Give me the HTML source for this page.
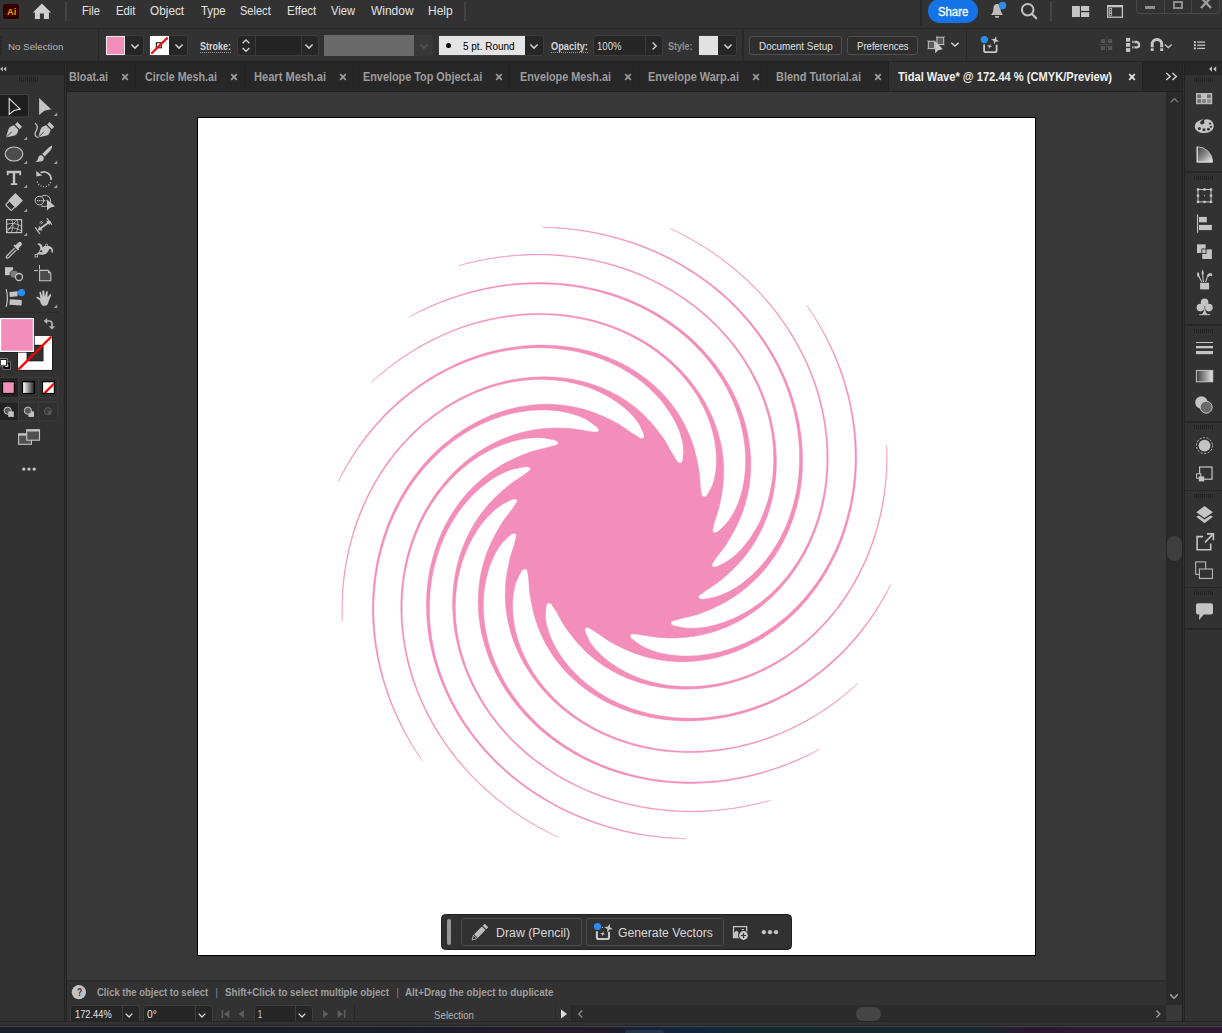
<!DOCTYPE html>
<html><head><meta charset="utf-8"><title>Tidal Wave</title>
<style>
html,body{margin:0;padding:0;}
body{width:1222px;height:1033px;overflow:hidden;background:#323232;position:relative;font-family:"Liberation Sans",sans-serif;}
div,svg{box-sizing:border-box;}
svg{overflow:visible;}
</style></head><body>
<div style="position:absolute;left:0px;top:0px;width:1222px;height:28px;background:#323232;"></div>
<div style="position:absolute;left:0px;top:28px;width:1222px;height:1px;background:#262626;"></div>
<div style="position:absolute;left:0px;top:29px;width:1222px;height:32px;background:#323232;"></div>
<div style="position:absolute;left:0px;top:61px;width:1222px;height:1px;background:#232323;"></div>
<div style="position:absolute;left:67px;top:91px;width:1099px;height:889px;background:#383838;"></div>
<div style="position:absolute;left:67px;top:91px;width:1117px;height:1px;background:#212121;"></div>
<div style="position:absolute;left:67px;top:62px;width:1117px;height:29px;background:#272727;"></div>
<div style="position:absolute;left:0px;top:62px;width:64px;height:960px;background:#323232;"></div>
<div style="position:absolute;left:0px;top:62px;width:64px;height:12.5px;background:#272727;"></div>
<div style="position:absolute;left:64px;top:62px;width:3px;height:960px;background:#2e2e2e;"></div>
<div style="position:absolute;left:64px;top:62px;width:1px;height:960px;background:#232323;"></div>
<div style="position:absolute;left:66px;top:62px;width:1px;height:960px;background:#232323;"></div>
<div style="position:absolute;left:197px;top:117px;width:839px;height:839px;background:#fff;border:1px solid #000;"></div>
<svg style="position:absolute;left:0;top:0" width="1222" height="1033"><path d="M530.7,469.6 L530.4,468.7 L530.1,467.9 L529.5,467.5 L528.8,467.1 L528.1,466.9 L527.3,466.8 L526.4,466.8 L525.5,466.8 L524.6,466.9 L523.6,467.1 L522.6,467.2 L521.6,467.4 L520.6,467.6 L519.7,467.8 L518.7,468.0 L517.7,468.2 L516.7,468.4 L515.8,468.6 L514.8,468.8 L513.8,469.0 L512.8,469.3 L511.8,469.6 L510.7,469.9 L509.7,470.3 L508.7,470.7 L507.6,471.1 L506.6,471.5 L505.5,472.0 L504.5,472.4 L503.4,472.9 L501.0,474.0 L498.6,475.3 L496.2,476.7 L493.8,478.1 L491.3,479.7 L488.9,481.3 L486.5,483.1 L484.2,484.9 L481.8,486.8 L479.5,488.8 L477.2,490.8 L474.9,493.0 L472.6,495.2 L470.4,497.6 L468.2,500.0 L466.1,502.4 L464.0,505.0 L461.9,507.6 L459.9,510.3 L457.9,513.1 L456.0,515.9 L454.1,518.8 L452.3,521.8 L450.5,524.8 L448.8,527.9 L447.2,531.1 L445.6,534.3 L444.1,537.6 L442.6,541.0 L441.2,544.4 L439.9,547.9 L438.7,551.4 L437.5,555.0 L436.4,558.7 L435.4,562.4 L434.4,566.1 L433.5,569.9 L432.8,573.7 L432.0,577.6 L431.4,581.6 L430.9,585.5 L430.4,589.5 L430.0,593.6 L429.8,597.6 L429.6,601.8 L429.5,605.9 L429.5,610.1 L429.5,614.3 L429.7,618.5 L430.0,622.8 L430.4,627.1 L430.9,631.4 L431.4,635.7 L432.1,640.1 L432.9,644.4 L433.8,648.8 L434.7,653.2 L435.8,657.5 L437.0,661.9 L438.3,666.3 L439.7,670.7 L441.2,675.1 L442.8,679.5 L444.5,683.8 L446.3,688.2 L448.3,692.6 L450.3,696.9 L452.4,701.2 L454.7,705.5 L457.1,709.8 L459.5,714.0 L462.1,718.2 L464.8,722.4 L467.6,726.6 L470.5,730.7 L473.4,734.8 L476.6,738.8 L479.8,742.8 L483.1,746.7 L486.5,750.6 L490.0,754.5 L493.6,758.3 L497.4,762.0 L501.2,765.7 L505.1,769.3 L509.1,772.8 L513.3,776.3 L517.5,779.7 L521.8,783.1 L526.2,786.3 L530.7,789.5 L535.3,792.6 L540.0,795.6 L544.8,798.6 L549.6,801.4 L554.6,804.2 L559.6,806.9 L564.7,809.4 L569.9,811.9 L575.1,814.3 L580.5,816.6 L585.9,818.8 L591.4,820.8 L596.9,822.8 L602.6,824.7 L608.3,826.4 L614.0,828.1 L619.8,829.6 L625.7,831.0 L631.6,832.3 L637.6,833.5 L643.6,834.6 L649.6,835.5 L655.7,836.3 L661.8,837.0 L668.0,837.6 L674.2,838.1 L680.2,838.4 L686.2,838.7 L686.2,838.7 L679.4,838.6 L672.7,838.3 L666.2,837.9 L659.8,837.3 L653.4,836.6 L647.1,835.8 L640.9,834.8 L634.7,833.7 L628.6,832.5 L622.5,831.1 L616.5,829.6 L610.6,828.1 L604.8,826.3 L599.0,824.5 L593.3,822.6 L587.6,820.5 L582.1,818.4 L576.6,816.1 L571.1,813.7 L565.8,811.2 L560.5,808.7 L555.4,806.0 L550.3,803.2 L545.3,800.3 L540.4,797.4 L535.6,794.3 L530.8,791.2 L526.2,788.0 L521.7,784.7 L517.2,781.3 L512.9,777.9 L508.7,774.4 L504.5,770.8 L500.5,767.1 L496.5,763.4 L492.7,759.6 L489.0,755.7 L485.3,751.8 L481.8,747.8 L478.4,743.8 L475.1,739.7 L471.9,735.6 L468.8,731.4 L465.8,727.2 L462.9,723.0 L460.2,718.7 L457.5,714.4 L454.9,710.0 L452.5,705.6 L450.2,701.2 L448.0,696.8 L445.9,692.3 L443.9,687.8 L442.0,683.3 L440.2,678.8 L438.5,674.3 L437.0,669.8 L435.5,665.3 L434.2,660.7 L433.0,656.2 L431.8,651.6 L430.8,647.1 L429.9,642.6 L429.1,638.0 L428.4,633.5 L427.8,629.0 L427.4,624.6 L427.0,620.1 L426.7,615.7 L426.5,611.2 L426.4,606.8 L426.5,602.5 L426.6,598.1 L426.8,593.8 L427.1,589.6 L427.5,585.3 L428.0,581.1 L428.6,577.0 L429.3,572.8 L430.1,568.8 L431.0,564.8 L431.9,560.8 L433.0,556.9 L434.1,553.0 L435.3,549.2 L436.6,545.5 L437.9,541.8 L439.4,538.1 L440.9,534.6 L442.4,531.0 L444.1,527.6 L445.8,524.2 L447.6,520.9 L449.5,517.6 L451.4,514.4 L453.3,511.3 L455.4,508.3 L457.5,505.3 L459.6,502.4 L461.8,499.6 L464.1,496.8 L466.4,494.1 L468.7,491.5 L471.1,489.0 L473.6,486.5 L476.0,484.2 L478.6,481.9 L481.1,479.6 L483.7,477.5 L486.4,475.4 L489.0,473.3 L491.7,471.4 L494.5,469.5 L497.3,467.7 L500.1,466.0 L502.9,464.3 L505.8,462.7 L508.7,461.2 L511.6,459.7 L513.0,459.1 L514.3,458.5 L515.6,457.8 L517.0,457.2 L518.3,456.7 L519.7,456.1 L521.0,455.5 L522.4,455.0 L523.8,454.4 L525.2,453.9 L526.6,453.4 L528.0,452.8 L529.5,452.3 L530.9,451.8 L532.4,451.3 L533.8,450.9 L535.2,450.5 L536.7,450.1 L538.1,449.8 L539.5,449.4 L540.9,449.1 L542.4,448.7 L543.9,448.4 L545.5,448.0 L547.1,447.6 L548.9,447.2 L550.8,446.6 L552.8,446.1 L555.1,445.4 L557.7,444.6 L557.7,444.6 L558.0,443.6 L558.1,442.8 L557.9,442.2 L557.6,441.7 L557.1,441.2 L556.4,440.8 L555.7,440.5 L554.9,440.2 L554.0,440.0 L553.1,439.8 L552.2,439.6 L551.3,439.4 L550.4,439.2 L549.4,439.0 L548.5,438.8 L547.6,438.7 L546.7,438.5 L545.8,438.3 L544.8,438.2 L543.9,438.0 L542.9,437.9 L541.9,437.8 L540.9,437.8 L539.8,437.7 L538.8,437.7 L537.7,437.7 L536.7,437.7 L535.6,437.7 L534.5,437.8 L533.4,437.8 L530.8,438.0 L528.2,438.3 L525.5,438.6 L522.9,439.1 L520.2,439.6 L517.4,440.2 L514.7,440.8 L511.9,441.6 L509.2,442.4 L506.4,443.3 L503.6,444.3 L500.8,445.4 L498.0,446.5 L495.2,447.7 L492.4,449.0 L489.6,450.4 L486.8,451.9 L484.0,453.4 L481.2,455.1 L478.5,456.8 L475.8,458.5 L473.0,460.4 L470.3,462.3 L467.6,464.4 L465.0,466.5 L462.3,468.7 L459.7,470.9 L457.2,473.3 L454.6,475.7 L452.1,478.2 L449.6,480.8 L447.2,483.5 L444.8,486.3 L442.4,489.1 L440.1,492.0 L437.9,495.0 L435.7,498.1 L433.5,501.2 L431.4,504.4 L429.3,507.7 L427.4,511.1 L425.4,514.5 L423.6,518.0 L421.8,521.6 L420.0,525.2 L418.4,528.9 L416.8,532.7 L415.3,536.5 L413.8,540.4 L412.4,544.4 L411.1,548.4 L409.9,552.4 L408.8,556.5 L407.8,560.7 L406.8,564.9 L405.9,569.2 L405.1,573.5 L404.4,577.8 L403.8,582.2 L403.3,586.7 L402.9,591.1 L402.6,595.7 L402.3,600.2 L402.2,604.8 L402.2,609.4 L402.2,614.0 L402.4,618.7 L402.7,623.4 L403.1,628.1 L403.5,632.9 L404.1,637.6 L404.8,642.4 L405.6,647.2 L406.5,652.0 L407.5,656.8 L408.6,661.6 L409.8,666.4 L411.2,671.2 L412.6,676.0 L414.2,680.8 L415.9,685.6 L417.6,690.4 L419.5,695.2 L421.5,699.9 L423.7,704.7 L425.9,709.4 L428.2,714.1 L430.7,718.8 L433.3,723.4 L435.9,728.1 L438.7,732.6 L441.6,737.2 L444.6,741.7 L447.8,746.2 L451.0,750.6 L454.3,755.0 L457.8,759.4 L461.3,763.6 L465.0,767.9 L468.7,772.0 L472.6,776.2 L476.6,780.2 L480.7,784.2 L484.9,788.1 L489.2,792.0 L493.6,795.8 L498.0,799.5 L502.6,803.1 L507.3,806.7 L512.1,810.2 L516.9,813.6 L521.9,816.9 L526.9,820.1 L532.0,823.2 L537.2,826.2 L542.4,829.1 L547.8,832.0 L553.1,834.7 L558.3,837.2 L558.3,837.2 L552.4,834.5 L546.6,831.6 L541.0,828.7 L535.5,825.7 L530.2,822.5 L524.9,819.3 L519.8,816.0 L514.7,812.6 L509.7,809.1 L504.9,805.6 L500.2,801.9 L495.5,798.2 L491.0,794.4 L486.6,790.5 L482.2,786.6 L478.0,782.5 L473.9,778.5 L469.9,774.3 L466.0,770.1 L462.2,765.8 L458.5,761.5 L455.0,757.1 L451.5,752.7 L448.2,748.2 L445.0,743.7 L441.8,739.1 L438.8,734.5 L436.0,729.9 L433.2,725.2 L430.5,720.5 L428.0,715.7 L425.6,711.0 L423.3,706.2 L421.1,701.4 L419.0,696.5 L417.0,691.7 L415.2,686.8 L413.4,681.9 L411.8,677.1 L410.3,672.2 L408.9,667.3 L407.6,662.4 L406.5,657.5 L405.4,652.6 L404.5,647.7 L403.6,642.8 L402.9,637.9 L402.3,633.1 L401.8,628.3 L401.3,623.4 L401.1,618.6 L400.9,613.9 L400.8,609.1 L400.8,604.4 L400.9,599.7 L401.1,595.0 L401.4,590.4 L401.9,585.8 L402.4,581.3 L403.0,576.7 L403.7,572.3 L404.5,567.8 L405.4,563.5 L406.4,559.1 L407.4,554.8 L408.6,550.6 L409.8,546.4 L411.2,542.3 L412.6,538.2 L414.1,534.2 L415.7,530.3 L417.3,526.4 L419.0,522.5 L420.8,518.8 L422.7,515.1 L424.6,511.4 L426.6,507.9 L428.7,504.4 L430.9,501.0 L433.1,497.6 L435.3,494.3 L437.7,491.1 L440.0,487.9 L442.5,484.9 L445.0,481.9 L447.5,478.9 L450.1,476.1 L452.8,473.3 L455.5,470.6 L458.2,468.0 L461.0,465.5 L463.8,463.0 L466.7,460.6 L469.6,458.3 L472.5,456.1 L475.5,454.0 L478.5,451.9 L481.5,450.0 L484.6,448.1 L487.7,446.3 L490.8,444.6 L493.9,443.0 L497.0,441.4 L500.2,440.0 L503.3,438.6 L506.5,437.4 L509.7,436.2 L512.9,435.1 L516.1,434.0 L519.3,433.1 L522.5,432.3 L525.8,431.5 L529.0,430.8 L532.2,430.2 L535.4,429.6 L538.6,429.2 L541.9,428.8 L545.1,428.5 L548.3,428.3 L549.8,428.2 L551.2,428.2 L552.7,428.1 L554.1,428.1 L555.6,428.1 L557.0,428.1 L558.5,428.1 L560.0,428.1 L561.4,428.1 L563.0,428.2 L564.5,428.2 L566.0,428.3 L567.6,428.3 L569.1,428.4 L570.6,428.6 L572.1,428.7 L573.6,428.9 L575.0,429.1 L576.4,429.3 L577.9,429.5 L579.3,429.8 L580.8,430.0 L582.4,430.3 L583.9,430.6 L585.6,430.8 L587.5,431.1 L589.5,431.4 L591.7,431.7 L594.2,432.0 L597.0,432.3 L597.0,432.3 L597.9,431.6 L598.6,431.0 L598.8,430.4 L598.8,429.8 L598.7,429.2 L598.3,428.7 L597.9,428.1 L597.4,427.6 L596.8,427.0 L596.2,426.5 L595.5,426.0 L594.8,425.4 L594.1,424.9 L593.5,424.4 L592.8,423.9 L592.1,423.4 L591.5,422.9 L590.8,422.4 L590.1,421.9 L589.4,421.4 L588.7,420.9 L587.9,420.4 L587.1,420.0 L586.2,419.5 L585.4,419.1 L584.5,418.6 L583.6,418.2 L582.7,417.8 L581.8,417.4 L580.9,417.0 L578.7,416.1 L576.4,415.3 L574.1,414.5 L571.6,413.8 L569.2,413.1 L566.6,412.5 L564.0,412.0 L561.4,411.5 L558.7,411.1 L555.9,410.7 L553.2,410.4 L550.3,410.2 L547.4,410.1 L544.5,410.0 L541.6,410.0 L538.6,410.0 L535.6,410.2 L532.6,410.3 L529.6,410.6 L526.5,411.0 L523.4,411.4 L520.3,411.8 L517.2,412.4 L514.1,413.0 L511.0,413.8 L507.8,414.5 L504.7,415.4 L501.5,416.3 L498.4,417.4 L495.2,418.5 L492.1,419.6 L488.9,420.9 L485.8,422.2 L482.6,423.6 L479.5,425.1 L476.4,426.7 L473.2,428.3 L470.2,430.1 L467.1,431.9 L464.0,433.7 L461.0,435.7 L458.0,437.7 L455.0,439.8 L452.0,442.0 L449.1,444.3 L446.1,446.7 L443.2,449.1 L440.4,451.6 L437.6,454.2 L434.8,456.9 L432.0,459.6 L429.3,462.4 L426.7,465.3 L424.1,468.3 L421.5,471.4 L419.0,474.5 L416.5,477.7 L414.0,481.0 L411.7,484.3 L409.4,487.7 L407.1,491.2 L404.9,494.8 L402.8,498.4 L400.7,502.1 L398.7,505.9 L396.7,509.7 L394.8,513.6 L393.0,517.5 L391.3,521.5 L389.6,525.6 L388.0,529.8 L386.5,534.0 L385.1,538.2 L383.7,542.5 L382.5,546.9 L381.3,551.3 L380.2,555.7 L379.1,560.2 L378.2,564.8 L377.4,569.4 L376.6,574.0 L375.9,578.7 L375.4,583.4 L374.9,588.2 L374.5,593.0 L374.2,597.8 L374.0,602.7 L373.9,607.6 L373.9,612.5 L374.1,617.5 L374.3,622.4 L374.6,627.4 L375.0,632.4 L375.5,637.5 L376.1,642.5 L376.9,647.5 L377.7,652.6 L378.6,657.7 L379.7,662.7 L380.8,667.8 L382.1,672.9 L383.4,677.9 L384.9,683.0 L386.5,688.1 L388.2,693.1 L390.0,698.2 L391.9,703.2 L393.9,708.2 L396.1,713.2 L398.3,718.2 L400.6,723.1 L403.0,728.0 L405.6,732.9 L408.2,737.7 L410.9,742.5 L413.7,747.2 L416.6,751.9 L419.5,756.3 L422.3,760.7 L422.3,760.7 L418.6,755.4 L415.1,750.3 L411.9,745.2 L408.9,740.1 L406.0,735.1 L403.2,729.9 L400.6,724.8 L398.1,719.7 L395.7,714.5 L393.4,709.4 L391.3,704.2 L389.2,699.0 L387.3,693.8 L385.6,688.6 L383.9,683.4 L382.3,678.1 L380.9,672.9 L379.6,667.7 L378.4,662.4 L377.3,657.2 L376.3,652.0 L375.4,646.8 L374.6,641.6 L374.0,636.4 L373.5,631.2 L373.0,626.1 L372.7,620.9 L372.5,615.8 L372.4,610.7 L372.4,605.7 L372.5,600.7 L372.7,595.7 L373.0,590.7 L373.4,585.8 L373.9,580.9 L374.5,576.0 L375.3,571.2 L376.1,566.4 L376.9,561.7 L377.9,557.0 L379.0,552.4 L380.2,547.8 L381.4,543.2 L382.8,538.7 L384.2,534.3 L385.7,529.9 L387.3,525.6 L389.0,521.3 L390.8,517.1 L392.6,513.0 L394.5,508.9 L396.5,504.9 L398.6,501.0 L400.7,497.1 L402.9,493.3 L405.2,489.5 L407.5,485.8 L409.9,482.2 L412.4,478.7 L414.9,475.3 L417.5,471.9 L420.1,468.6 L422.8,465.3 L425.6,462.2 L428.4,459.1 L431.2,456.1 L434.1,453.2 L437.0,450.4 L440.0,447.6 L443.0,445.0 L446.1,442.4 L449.2,439.9 L452.3,437.5 L455.5,435.1 L458.7,432.9 L461.9,430.7 L465.1,428.6 L468.4,426.6 L471.7,424.7 L475.0,422.9 L478.3,421.2 L481.7,419.5 L485.0,418.0 L488.4,416.5 L491.7,415.1 L495.1,413.8 L498.5,412.6 L501.9,411.5 L505.2,410.4 L508.6,409.5 L512.0,408.6 L515.4,407.8 L518.7,407.1 L522.1,406.4 L525.5,405.9 L528.8,405.4 L532.1,405.0 L535.4,404.7 L538.7,404.5 L542.0,404.3 L545.2,404.3 L548.5,404.3 L551.7,404.3 L554.9,404.5 L558.0,404.7 L561.2,405.0 L564.3,405.4 L567.4,405.8 L570.5,406.3 L573.5,406.9 L576.5,407.5 L579.5,408.2 L582.5,408.9 L585.5,409.8 L588.4,410.7 L591.3,411.6 L594.2,412.7 L597.1,413.8 L600.0,414.9 L601.2,415.4 L602.5,416.0 L603.8,416.5 L605.0,417.1 L606.3,417.7 L607.5,418.3 L608.8,418.9 L610.0,419.5 L611.3,420.2 L612.6,420.8 L613.9,421.5 L615.2,422.2 L616.5,422.9 L617.8,423.6 L619.1,424.4 L620.3,425.1 L621.5,425.9 L622.6,426.6 L623.8,427.4 L625.0,428.2 L626.1,429.0 L627.3,429.9 L628.5,430.7 L629.8,431.6 L631.2,432.6 L632.7,433.6 L634.4,434.6 L636.2,435.8 L638.4,437.1 L640.8,438.6 L640.8,438.6 L642.1,438.5 L643.0,438.3 L643.5,437.9 L643.9,437.4 L644.1,436.9 L644.2,436.3 L644.1,435.6 L643.9,434.9 L643.7,434.3 L643.5,433.5 L643.2,432.8 L642.9,432.1 L642.5,431.4 L642.2,430.7 L641.9,429.9 L641.6,429.2 L641.3,428.5 L641.0,427.8 L640.7,427.1 L640.4,426.4 L640.0,425.7 L639.6,425.0 L639.1,424.3 L638.7,423.5 L638.2,422.8 L637.7,422.0 L637.1,421.3 L636.6,420.6 L636.0,419.8 L635.5,419.1 L634.1,417.4 L632.6,415.7 L631.0,414.1 L629.4,412.4 L627.7,410.8 L625.9,409.2 L624.1,407.6 L622.2,406.1 L620.2,404.5 L618.2,403.1 L616.1,401.6 L614.0,400.2 L611.8,398.8 L609.5,397.4 L607.2,396.1 L604.9,394.8 L602.5,393.5 L600.0,392.3 L597.5,391.2 L595.0,390.1 L592.4,389.0 L589.7,388.0 L587.0,387.0 L584.3,386.1 L581.5,385.3 L578.6,384.5 L575.8,383.7 L572.8,383.0 L569.9,382.4 L566.9,381.8 L563.8,381.3 L560.7,380.8 L557.6,380.4 L554.5,380.1 L551.3,379.9 L548.0,379.7 L544.8,379.6 L541.5,379.5 L538.2,379.5 L534.9,379.6 L531.5,379.8 L528.1,380.0 L524.7,380.3 L521.3,380.7 L517.8,381.2 L514.3,381.7 L510.9,382.3 L507.4,383.0 L503.9,383.8 L500.4,384.6 L496.9,385.6 L493.4,386.6 L489.9,387.6 L486.4,388.8 L482.9,390.0 L479.3,391.4 L475.8,392.8 L472.3,394.3 L468.9,395.8 L465.4,397.5 L461.9,399.2 L458.5,401.0 L455.0,402.9 L451.6,404.9 L448.2,406.9 L444.8,409.1 L441.5,411.3 L438.1,413.6 L434.8,416.0 L431.6,418.4 L428.3,421.0 L425.1,423.6 L421.9,426.3 L418.8,429.1 L415.7,431.9 L412.6,434.9 L409.6,437.9 L406.6,441.0 L403.7,444.2 L400.8,447.4 L398.0,450.7 L395.2,454.1 L392.4,457.6 L389.8,461.2 L387.1,464.8 L384.6,468.5 L382.1,472.2 L379.6,476.1 L377.2,480.0 L374.9,483.9 L372.7,488.0 L370.5,492.1 L368.4,496.2 L366.3,500.5 L364.4,504.7 L362.5,509.1 L360.7,513.5 L358.9,517.9 L357.3,522.4 L355.7,527.0 L354.2,531.6 L352.8,536.3 L351.4,541.0 L350.2,545.8 L349.0,550.6 L348.0,555.5 L347.0,560.4 L346.1,565.3 L345.3,570.3 L344.6,575.3 L344.0,580.3 L343.4,585.4 L343.0,590.5 L342.7,595.6 L342.4,600.7 L342.3,605.9 L342.2,611.0 L342.2,616.1 L342.3,621.1 L342.3,621.1 L342.1,615.3 L341.9,609.7 L342.0,604.3 L342.1,598.9 L342.3,593.6 L342.7,588.3 L343.1,583.0 L343.7,577.8 L344.3,572.6 L345.1,567.5 L345.9,562.4 L346.9,557.3 L347.9,552.3 L349.0,547.4 L350.3,542.5 L351.6,537.7 L353.0,532.9 L354.4,528.1 L356.0,523.4 L357.7,518.8 L359.4,514.2 L361.2,509.7 L363.1,505.2 L365.1,500.9 L367.1,496.5 L369.3,492.3 L371.5,488.1 L373.7,483.9 L376.1,479.9 L378.5,475.9 L380.9,472.0 L383.5,468.1 L386.1,464.3 L388.7,460.6 L391.5,457.0 L394.2,453.4 L397.1,449.9 L399.9,446.5 L402.9,443.2 L405.9,439.9 L408.9,436.8 L412.0,433.6 L415.1,430.6 L418.3,427.7 L421.5,424.8 L424.7,422.0 L428.0,419.4 L431.3,416.7 L434.7,414.2 L438.1,411.8 L441.5,409.4 L444.9,407.1 L448.4,404.9 L451.9,402.8 L455.4,400.8 L458.9,398.8 L462.5,396.9 L466.1,395.2 L469.7,393.5 L473.3,391.9 L476.9,390.3 L480.5,388.9 L484.1,387.5 L487.7,386.2 L491.4,385.0 L495.0,383.9 L498.6,382.9 L502.3,382.0 L505.9,381.1 L509.5,380.3 L513.2,379.6 L516.8,379.0 L520.4,378.4 L524.0,378.0 L527.5,377.6 L531.1,377.3 L534.7,377.0 L538.2,376.9 L541.7,376.8 L545.2,376.8 L548.7,376.9 L552.1,377.0 L555.6,377.2 L559.0,377.5 L562.3,377.8 L565.7,378.3 L569.0,378.8 L572.3,379.3 L575.6,379.9 L578.8,380.6 L582.0,381.4 L585.2,382.2 L588.3,383.1 L591.4,384.1 L594.5,385.1 L597.5,386.2 L600.5,387.3 L603.4,388.5 L606.3,389.8 L609.1,391.1 L611.9,392.4 L614.7,393.9 L617.4,395.3 L620.0,396.9 L622.6,398.5 L625.1,400.1 L627.6,401.8 L630.0,403.5 L632.4,405.2 L634.8,407.1 L637.0,408.9 L639.3,410.8 L641.5,412.8 L643.6,414.8 L645.6,416.8 L647.6,418.9 L649.6,421.0 L651.5,423.1 L653.4,425.3 L654.3,426.3 L655.1,427.3 L655.9,428.3 L656.7,429.3 L657.5,430.4 L658.3,431.4 L659.1,432.5 L659.9,433.5 L660.7,434.6 L661.5,435.7 L662.3,436.8 L663.1,438.0 L663.9,439.1 L664.7,440.3 L665.4,441.4 L666.1,442.6 L666.8,443.7 L667.5,444.9 L668.1,446.0 L668.8,447.2 L669.4,448.3 L670.1,449.6 L670.7,450.8 L671.4,452.1 L672.2,453.5 L673.1,454.9 L674.1,456.5 L675.2,458.3 L676.5,460.3 L678.0,462.6 L678.0,462.6 L679.2,462.9 L680.2,463.0 L680.9,462.9 L681.5,462.6 L681.9,462.2 L682.2,461.7 L682.5,461.1 L682.7,460.4 L682.8,459.7 L682.9,459.0 L683.0,458.2 L683.1,457.4 L683.1,456.6 L683.2,455.9 L683.2,455.1 L683.3,454.4 L683.4,453.6 L683.4,452.8 L683.5,452.1 L683.5,451.3 L683.5,450.5 L683.5,449.7 L683.5,448.8 L683.4,448.0 L683.3,447.1 L683.2,446.2 L683.1,445.4 L682.9,444.5 L682.8,443.6 L682.6,442.7 L682.2,440.6 L681.7,438.5 L681.0,436.3 L680.4,434.2 L679.6,432.0 L678.8,429.8 L677.8,427.6 L676.9,425.4 L675.8,423.1 L674.7,420.9 L673.5,418.7 L672.2,416.5 L670.9,414.3 L669.5,412.1 L668.0,409.9 L666.5,407.7 L664.9,405.5 L663.3,403.4 L661.6,401.2 L659.8,399.1 L657.9,397.0 L656.0,395.0 L654.1,392.9 L652.0,390.9 L650.0,388.9 L647.8,387.0 L645.6,385.0 L643.3,383.1 L641.0,381.3 L638.6,379.5 L636.2,377.7 L633.7,375.9 L631.2,374.2 L628.6,372.5 L625.9,370.9 L623.2,369.3 L620.5,367.8 L617.7,366.3 L614.8,364.9 L611.9,363.5 L609.0,362.1 L606.0,360.9 L602.9,359.6 L599.8,358.4 L596.7,357.3 L593.5,356.2 L590.3,355.2 L587.0,354.3 L583.7,353.4 L580.4,352.6 L577.0,351.8 L573.5,351.1 L570.1,350.5 L566.6,349.9 L563.0,349.4 L559.4,349.0 L555.8,348.6 L552.2,348.3 L548.5,348.1 L544.8,347.9 L541.1,347.8 L537.4,347.8 L533.6,347.9 L529.8,348.1 L526.0,348.3 L522.2,348.6 L518.3,349.0 L514.5,349.5 L510.6,350.0 L506.7,350.6 L502.8,351.3 L498.9,352.1 L495.0,353.0 L491.0,353.9 L487.1,355.0 L483.2,356.1 L479.2,357.3 L475.3,358.6 L471.4,359.9 L467.5,361.4 L463.6,362.9 L459.7,364.6 L455.8,366.3 L451.9,368.1 L448.0,370.0 L444.1,371.9 L440.3,374.0 L436.5,376.1 L432.7,378.4 L428.9,380.7 L425.2,383.1 L421.5,385.6 L417.8,388.1 L414.1,390.8 L410.5,393.5 L406.9,396.3 L403.4,399.2 L399.8,402.2 L396.4,405.3 L392.9,408.4 L389.6,411.6 L386.2,414.9 L382.9,418.3 L379.7,421.8 L376.5,425.3 L373.3,428.9 L370.3,432.6 L367.2,436.4 L364.3,440.2 L361.3,444.1 L358.5,448.1 L355.7,452.1 L353.0,456.2 L350.4,460.4 L347.8,464.6 L345.3,468.9 L342.8,473.2 L340.5,477.4 L338.3,481.5 L338.3,481.5 L340.7,476.4 L343.2,471.6 L345.7,466.9 L348.4,462.4 L351.0,457.9 L353.8,453.5 L356.6,449.3 L359.5,445.1 L362.5,440.9 L365.5,436.9 L368.6,433.0 L371.7,429.1 L374.9,425.4 L378.2,421.7 L381.5,418.1 L384.8,414.5 L388.2,411.1 L391.7,407.8 L395.2,404.5 L398.7,401.3 L402.3,398.2 L406.0,395.2 L409.7,392.2 L413.4,389.4 L417.1,386.7 L420.9,384.0 L424.7,381.4 L428.5,378.9 L432.4,376.5 L436.3,374.2 L440.2,372.0 L444.1,369.9 L448.1,367.9 L452.1,365.9 L456.1,364.1 L460.1,362.3 L464.1,360.6 L468.1,359.0 L472.2,357.5 L476.2,356.1 L480.3,354.7 L484.3,353.5 L488.4,352.3 L492.4,351.3 L496.5,350.3 L500.5,349.4 L504.6,348.6 L508.6,347.9 L512.7,347.2 L516.7,346.7 L520.7,346.2 L524.7,345.8 L528.7,345.5 L532.6,345.3 L536.6,345.1 L540.5,345.1 L544.4,345.1 L548.3,345.2 L552.2,345.3 L556.0,345.6 L559.8,345.9 L563.6,346.3 L567.3,346.8 L571.0,347.3 L574.7,347.9 L578.3,348.6 L581.9,349.4 L585.5,350.2 L589.0,351.1 L592.5,352.1 L596.0,353.1 L599.4,354.2 L602.7,355.4 L606.1,356.6 L609.3,357.9 L612.5,359.2 L615.7,360.6 L618.8,362.1 L621.9,363.6 L624.9,365.2 L627.9,366.8 L630.8,368.5 L633.6,370.2 L636.4,372.0 L639.1,373.8 L641.8,375.7 L644.4,377.6 L647.0,379.6 L649.5,381.6 L651.9,383.6 L654.3,385.7 L656.6,387.8 L658.8,389.9 L661.0,392.1 L663.2,394.3 L665.2,396.6 L667.2,398.8 L669.1,401.1 L671.0,403.5 L672.8,405.8 L674.6,408.2 L676.2,410.6 L677.9,413.0 L679.4,415.5 L680.9,417.9 L682.3,420.4 L683.7,422.9 L685.0,425.4 L686.2,427.9 L687.4,430.5 L688.5,433.0 L689.6,435.6 L690.6,438.2 L691.6,440.8 L692.5,443.4 L693.4,446.1 L694.2,448.7 L694.9,451.4 L695.6,454.1 L695.9,455.4 L696.2,456.6 L696.5,457.8 L696.8,459.0 L697.0,460.2 L697.3,461.5 L697.5,462.7 L697.8,463.9 L698.0,465.2 L698.3,466.5 L698.5,467.8 L698.7,469.1 L698.9,470.4 L699.1,471.7 L699.3,473.0 L699.5,474.3 L699.6,475.6 L699.7,476.8 L699.8,478.1 L699.9,479.4 L699.9,480.7 L700.0,482.0 L700.1,483.3 L700.2,484.7 L700.3,486.2 L700.5,487.8 L700.7,489.6 L701.0,491.4 L701.4,493.7 L701.9,496.1 L701.9,496.1 L702.9,496.7 L703.8,497.0 L704.5,497.0 L705.2,496.9 L705.8,496.6 L706.3,496.2 L706.8,495.6 L707.3,495.0 L707.7,494.4 L708.1,493.7 L708.5,493.0 L708.9,492.2 L709.3,491.5 L709.7,490.8 L710.1,490.0 L710.5,489.3 L710.8,488.6 L711.2,487.8 L711.6,487.1 L711.9,486.3 L712.3,485.5 L712.6,484.7 L712.9,483.9 L713.2,483.0 L713.5,482.1 L713.7,481.2 L714.0,480.3 L714.2,479.4 L714.4,478.5 L714.6,477.5 L715.1,475.3 L715.5,473.1 L715.8,470.8 L716.0,468.4 L716.2,466.0 L716.3,463.6 L716.4,461.1 L716.4,458.6 L716.3,456.1 L716.2,453.6 L716.0,451.0 L715.7,448.4 L715.4,445.8 L715.0,443.2 L714.6,440.5 L714.0,437.9 L713.5,435.2 L712.8,432.5 L712.1,429.8 L711.3,427.1 L710.5,424.4 L709.5,421.7 L708.6,419.0 L707.5,416.3 L706.4,413.5 L705.2,410.8 L703.9,408.1 L702.5,405.4 L701.1,402.7 L699.6,400.0 L698.1,397.3 L696.4,394.6 L694.7,392.0 L692.9,389.3 L691.1,386.7 L689.1,384.1 L687.1,381.5 L685.1,378.9 L682.9,376.4 L680.7,373.9 L678.4,371.4 L676.0,368.9 L673.6,366.5 L671.1,364.1 L668.5,361.8 L665.9,359.5 L663.2,357.2 L660.4,355.0 L657.6,352.8 L654.7,350.6 L651.7,348.5 L648.7,346.5 L645.6,344.5 L642.4,342.6 L639.2,340.7 L635.9,338.8 L632.6,337.0 L629.2,335.3 L625.8,333.6 L622.3,332.0 L618.7,330.5 L615.1,329.0 L611.4,327.6 L607.7,326.2 L604.0,325.0 L600.1,323.7 L596.3,322.6 L592.4,321.5 L588.4,320.5 L584.4,319.6 L580.4,318.8 L576.3,318.0 L572.2,317.3 L568.0,316.7 L563.8,316.1 L559.6,315.7 L555.3,315.3 L551.1,315.0 L546.7,314.8 L542.4,314.7 L538.0,314.7 L533.6,314.7 L529.2,314.9 L524.7,315.1 L520.3,315.4 L515.8,315.9 L511.3,316.4 L506.8,317.0 L502.3,317.7 L497.7,318.4 L493.2,319.3 L488.6,320.3 L484.1,321.4 L479.5,322.5 L475.0,323.8 L470.4,325.1 L465.9,326.6 L461.3,328.1 L456.8,329.8 L452.3,331.5 L447.8,333.3 L443.3,335.3 L438.8,337.3 L434.4,339.4 L429.9,341.7 L425.5,344.0 L421.1,346.4 L416.7,348.9 L412.4,351.5 L408.1,354.2 L403.8,357.0 L399.6,359.9 L395.4,362.9 L391.2,366.0 L387.1,369.1 L383.1,372.4 L379.0,375.7 L375.1,379.1 L371.2,382.5 L371.2,382.5 L375.3,378.7 L379.4,375.1 L383.5,371.6 L387.6,368.2 L391.8,365.0 L396.1,361.8 L400.3,358.8 L404.6,355.8 L409.0,353.0 L413.4,350.2 L417.8,347.6 L422.2,345.0 L426.6,342.6 L431.1,340.2 L435.6,338.0 L440.1,335.9 L444.7,333.8 L449.2,331.9 L453.8,330.0 L458.4,328.3 L463.0,326.6 L467.6,325.1 L472.2,323.6 L476.8,322.3 L481.4,321.0 L486.0,319.9 L490.7,318.8 L495.3,317.9 L499.9,317.0 L504.4,316.2 L509.0,315.6 L513.6,315.0 L518.2,314.5 L522.7,314.1 L527.2,313.8 L531.7,313.6 L536.2,313.5 L540.7,313.5 L545.1,313.5 L549.5,313.7 L553.9,313.9 L558.2,314.2 L562.6,314.6 L566.9,315.1 L571.1,315.7 L575.3,316.4 L579.5,317.1 L583.6,317.9 L587.7,318.8 L591.8,319.8 L595.8,320.8 L599.8,322.0 L603.7,323.2 L607.6,324.4 L611.4,325.8 L615.2,327.2 L618.9,328.7 L622.6,330.2 L626.2,331.8 L629.8,333.5 L633.3,335.3 L636.7,337.1 L640.1,338.9 L643.4,340.8 L646.7,342.8 L649.9,344.8 L653.1,346.9 L656.1,349.1 L659.2,351.2 L662.1,353.5 L665.0,355.8 L667.8,358.1 L670.6,360.5 L673.3,362.9 L675.9,365.3 L678.4,367.8 L680.9,370.3 L683.3,372.9 L685.7,375.5 L688.0,378.1 L690.2,380.8 L692.3,383.5 L694.4,386.2 L696.4,389.0 L698.3,391.8 L700.2,394.6 L702.0,397.4 L703.7,400.2 L705.4,403.1 L706.9,406.0 L708.5,408.9 L709.9,411.8 L711.3,414.7 L712.6,417.7 L713.8,420.6 L714.9,423.6 L716.0,426.5 L717.0,429.5 L718.0,432.5 L718.8,435.5 L719.6,438.4 L720.3,441.4 L721.0,444.4 L721.6,447.3 L722.1,450.3 L722.5,453.2 L722.9,456.2 L723.2,459.1 L723.4,462.0 L723.6,465.0 L723.7,467.9 L723.8,470.8 L723.7,473.6 L723.6,476.5 L723.5,479.3 L723.3,482.2 L723.0,485.0 L722.7,487.8 L722.3,490.6 L722.1,491.9 L721.9,493.1 L721.7,494.4 L721.5,495.6 L721.3,496.9 L721.0,498.1 L720.8,499.3 L720.5,500.6 L720.3,501.8 L720.0,503.1 L719.7,504.4 L719.5,505.7 L719.2,507.0 L718.9,508.3 L718.5,509.6 L718.2,510.8 L717.8,512.0 L717.4,513.3 L717.0,514.5 L716.6,515.7 L716.2,516.9 L715.8,518.1 L715.4,519.4 L714.9,520.7 L714.5,522.1 L714.1,523.6 L713.7,525.3 L713.3,527.0 L712.9,529.1 L712.5,531.4 L712.5,531.4 L713.3,532.1 L714.1,532.6 L714.9,532.7 L715.6,532.6 L716.3,532.4 L717.0,532.1 L717.7,531.7 L718.4,531.2 L719.1,530.6 L719.8,530.1 L720.4,529.5 L721.1,528.8 L721.8,528.2 L722.4,527.5 L723.1,526.9 L723.7,526.2 L724.4,525.6 L725.0,524.9 L725.7,524.3 L726.3,523.6 L726.9,522.8 L727.5,522.1 L728.1,521.3 L728.7,520.5 L729.3,519.7 L729.9,518.8 L730.5,518.0 L731.1,517.1 L731.6,516.2 L732.2,515.3 L733.4,513.2 L734.5,511.0 L735.6,508.7 L736.7,506.3 L737.7,503.9 L738.7,501.4 L739.6,498.9 L740.4,496.3 L741.2,493.7 L741.9,491.0 L742.6,488.2 L743.2,485.4 L743.7,482.6 L744.2,479.7 L744.6,476.8 L744.9,473.9 L745.2,470.9 L745.4,467.8 L745.5,464.8 L745.6,461.7 L745.5,458.6 L745.5,455.5 L745.3,452.3 L745.1,449.1 L744.8,445.9 L744.4,442.7 L744.0,439.5 L743.4,436.2 L742.8,433.0 L742.1,429.7 L741.4,426.4 L740.5,423.1 L739.6,419.8 L738.6,416.5 L737.5,413.2 L736.4,409.9 L735.1,406.6 L733.8,403.3 L732.4,400.0 L730.9,396.7 L729.3,393.5 L727.7,390.2 L726.0,386.9 L724.2,383.7 L722.3,380.5 L720.3,377.3 L718.2,374.1 L716.1,371.0 L713.8,367.8 L711.5,364.7 L709.1,361.6 L706.7,358.6 L704.1,355.6 L701.5,352.6 L698.7,349.7 L695.9,346.8 L693.1,343.9 L690.1,341.1 L687.1,338.3 L683.9,335.6 L680.7,332.9 L677.5,330.3 L674.1,327.7 L670.7,325.2 L667.2,322.7 L663.6,320.3 L660.0,318.0 L656.2,315.7 L652.5,313.5 L648.6,311.3 L644.7,309.2 L640.7,307.2 L636.6,305.3 L632.5,303.4 L628.3,301.6 L624.1,299.9 L619.8,298.3 L615.4,296.7 L611.0,295.2 L606.5,293.9 L602.0,292.5 L597.4,291.3 L592.7,290.2 L588.1,289.1 L583.3,288.2 L578.6,287.3 L573.7,286.6 L568.9,285.9 L564.0,285.3 L559.0,284.8 L554.0,284.5 L549.0,284.2 L544.0,284.0 L538.9,283.9 L533.8,284.0 L528.7,284.1 L523.6,284.3 L518.4,284.7 L513.2,285.1 L508.0,285.6 L502.8,286.3 L497.6,287.1 L492.4,288.0 L487.1,288.9 L481.9,290.1 L476.6,291.3 L471.4,292.6 L466.1,294.0 L460.9,295.6 L455.6,297.2 L450.4,299.0 L445.2,300.9 L440.0,302.8 L434.8,304.9 L429.7,307.1 L424.6,309.4 L419.5,311.8 L414.4,314.3 L409.5,316.8 L409.5,316.8 L414.8,313.9 L420.0,311.1 L425.3,308.6 L430.5,306.1 L435.8,303.8 L441.1,301.7 L446.4,299.6 L451.7,297.7 L457.0,295.9 L462.4,294.2 L467.7,292.6 L473.0,291.1 L478.4,289.8 L483.7,288.6 L489.0,287.5 L494.4,286.5 L499.7,285.6 L505.0,284.8 L510.3,284.2 L515.6,283.6 L520.9,283.2 L526.1,282.9 L531.3,282.7 L536.5,282.5 L541.7,282.5 L546.9,282.7 L552.0,282.9 L557.1,283.2 L562.1,283.6 L567.1,284.1 L572.1,284.7 L577.0,285.5 L581.9,286.3 L586.8,287.2 L591.6,288.2 L596.3,289.3 L601.0,290.5 L605.7,291.7 L610.3,293.1 L614.9,294.6 L619.3,296.1 L623.8,297.7 L628.2,299.4 L632.5,301.2 L636.7,303.1 L640.9,305.1 L645.1,307.1 L649.1,309.2 L653.1,311.3 L657.0,313.6 L660.9,315.9 L664.7,318.3 L668.4,320.7 L672.0,323.2 L675.6,325.8 L679.1,328.4 L682.5,331.1 L685.8,333.8 L689.1,336.6 L692.3,339.4 L695.4,342.3 L698.4,345.3 L701.3,348.3 L704.2,351.3 L706.9,354.4 L709.6,357.5 L712.2,360.6 L714.8,363.8 L717.2,367.0 L719.5,370.3 L721.8,373.6 L724.0,376.9 L726.1,380.2 L728.1,383.6 L730.0,386.9 L731.9,390.3 L733.6,393.8 L735.3,397.2 L736.9,400.6 L738.4,404.1 L739.8,407.6 L741.1,411.0 L742.3,414.5 L743.5,418.0 L744.5,421.4 L745.5,424.9 L746.4,428.4 L747.2,431.9 L747.9,435.3 L748.6,438.8 L749.1,442.2 L749.6,445.6 L750.0,449.1 L750.3,452.5 L750.6,455.8 L750.7,459.2 L750.8,462.5 L750.8,465.9 L750.7,469.2 L750.6,472.4 L750.4,475.7 L750.1,478.9 L749.7,482.1 L749.3,485.2 L748.8,488.3 L748.2,491.4 L747.6,494.5 L746.9,497.5 L746.1,500.5 L745.3,503.5 L744.4,506.4 L743.5,509.3 L742.5,512.2 L741.4,515.0 L740.3,517.8 L739.1,520.6 L737.9,523.3 L736.6,526.0 L735.2,528.7 L734.6,529.9 L734.0,531.1 L733.4,532.2 L732.7,533.4 L732.1,534.6 L731.4,535.7 L730.7,536.9 L730.1,538.0 L729.4,539.2 L728.7,540.4 L728.0,541.5 L727.2,542.7 L726.5,543.9 L725.7,545.1 L725.0,546.2 L724.2,547.3 L723.4,548.4 L722.6,549.4 L721.8,550.5 L721.0,551.6 L720.1,552.6 L719.3,553.7 L718.4,554.8 L717.6,555.9 L716.7,557.1 L715.7,558.4 L714.8,559.9 L713.7,561.4 L712.7,563.3 L711.5,565.3 L711.5,565.3 L712.1,566.1 L712.8,566.6 L713.5,566.9 L714.3,567.0 L715.1,567.0 L715.9,566.8 L716.7,566.6 L717.6,566.3 L718.5,565.9 L719.3,565.5 L720.2,565.1 L721.1,564.6 L721.9,564.1 L722.8,563.6 L723.7,563.2 L724.6,562.7 L725.4,562.2 L726.3,561.7 L727.1,561.2 L728.0,560.7 L728.9,560.1 L729.7,559.5 L730.6,558.9 L731.4,558.2 L732.3,557.6 L733.2,556.9 L734.0,556.2 L734.9,555.4 L735.7,554.7 L736.6,553.9 L738.4,552.1 L740.3,550.2 L742.2,548.2 L744.0,546.1 L745.7,544.0 L747.5,541.7 L749.2,539.4 L750.9,537.1 L752.5,534.6 L754.0,532.1 L755.6,529.6 L757.1,526.9 L758.5,524.2 L759.9,521.5 L761.2,518.6 L762.4,515.8 L763.6,512.8 L764.8,509.8 L765.9,506.8 L766.9,503.7 L767.9,500.5 L768.8,497.3 L769.6,494.1 L770.3,490.8 L771.0,487.4 L771.6,484.0 L772.1,480.6 L772.6,477.1 L773.0,473.6 L773.3,470.0 L773.5,466.4 L773.6,462.8 L773.7,459.1 L773.6,455.4 L773.5,451.7 L773.3,447.9 L773.0,444.1 L772.6,440.3 L772.2,436.5 L771.6,432.6 L770.9,428.8 L770.2,424.9 L769.3,421.0 L768.4,417.1 L767.4,413.2 L766.2,409.3 L765.0,405.4 L763.7,401.5 L762.3,397.6 L760.7,393.7 L759.1,389.8 L757.4,385.9 L755.6,382.0 L753.7,378.2 L751.7,374.4 L749.6,370.5 L747.4,366.7 L745.1,363.0 L742.8,359.2 L740.3,355.5 L737.7,351.8 L735.0,348.2 L732.2,344.5 L729.4,341.0 L726.4,337.4 L723.3,333.9 L720.2,330.5 L716.9,327.1 L713.6,323.7 L710.1,320.4 L706.6,317.2 L703.0,314.0 L699.3,310.9 L695.5,307.8 L691.6,304.8 L687.6,301.9 L683.5,299.0 L679.4,296.2 L675.2,293.5 L670.9,290.8 L666.5,288.3 L662.0,285.8 L657.5,283.4 L652.8,281.0 L648.1,278.8 L643.4,276.6 L638.5,274.6 L633.6,272.6 L628.6,270.7 L623.6,269.0 L618.5,267.3 L613.3,265.7 L608.1,264.2 L602.8,262.8 L597.5,261.6 L592.1,260.4 L586.6,259.3 L581.1,258.4 L575.6,257.5 L570.0,256.8 L564.3,256.2 L558.7,255.7 L553.0,255.3 L547.2,255.0 L541.4,254.9 L535.6,254.9 L529.8,255.0 L523.9,255.2 L518.0,255.5 L512.1,256.0 L506.2,256.6 L500.3,257.3 L494.3,258.1 L488.4,259.1 L482.4,260.2 L476.5,261.4 L470.5,262.7 L464.6,264.1 L458.8,265.7 L458.8,265.7 L465.0,263.9 L471.1,262.3 L477.2,260.9 L483.2,259.7 L489.3,258.5 L495.3,257.5 L501.4,256.7 L507.4,256.0 L513.4,255.4 L519.3,254.9 L525.3,254.6 L531.2,254.3 L537.1,254.3 L543.0,254.3 L548.8,254.5 L554.6,254.7 L560.4,255.1 L566.1,255.7 L571.8,256.3 L577.5,257.1 L583.1,257.9 L588.6,258.9 L594.1,260.0 L599.6,261.2 L605.0,262.5 L610.3,263.9 L615.6,265.4 L620.8,267.1 L625.9,268.8 L631.0,270.6 L636.0,272.5 L641.0,274.6 L645.8,276.7 L650.6,278.9 L655.4,281.2 L660.0,283.5 L664.6,286.0 L669.1,288.5 L673.5,291.2 L677.9,293.9 L682.1,296.7 L686.3,299.5 L690.4,302.4 L694.4,305.4 L698.3,308.5 L702.1,311.6 L705.9,314.8 L709.5,318.1 L713.1,321.4 L716.5,324.8 L719.9,328.2 L723.1,331.7 L726.3,335.2 L729.4,338.8 L732.4,342.4 L735.3,346.1 L738.1,349.8 L740.7,353.5 L743.3,357.3 L745.8,361.1 L748.2,364.9 L750.5,368.8 L752.7,372.7 L754.8,376.6 L756.8,380.5 L758.7,384.5 L760.5,388.4 L762.2,392.4 L763.8,396.4 L765.3,400.4 L766.7,404.4 L768.0,408.4 L769.3,412.4 L770.4,416.5 L771.4,420.5 L772.3,424.5 L773.1,428.5 L773.9,432.5 L774.5,436.4 L775.0,440.4 L775.5,444.4 L775.8,448.3 L776.1,452.2 L776.3,456.1 L776.4,460.0 L776.4,463.9 L776.3,467.7 L776.1,471.5 L775.9,475.3 L775.5,479.1 L775.1,482.8 L774.6,486.5 L774.0,490.1 L773.4,493.8 L772.6,497.3 L771.8,500.9 L770.9,504.3 L769.9,507.8 L768.9,511.2 L767.8,514.5 L766.6,517.8 L765.3,521.1 L764.0,524.3 L762.6,527.4 L761.1,530.5 L759.6,533.6 L758.0,536.5 L756.4,539.4 L754.7,542.3 L752.9,545.1 L751.1,547.9 L749.2,550.5 L747.3,553.2 L745.3,555.7 L743.3,558.2 L741.2,560.7 L739.1,563.1 L736.9,565.4 L734.7,567.7 L733.7,568.7 L732.7,569.7 L731.6,570.7 L730.6,571.6 L729.6,572.6 L728.5,573.5 L727.5,574.5 L726.4,575.4 L725.3,576.4 L724.2,577.3 L723.1,578.3 L722.0,579.2 L720.8,580.2 L719.7,581.1 L718.5,582.0 L717.4,582.8 L716.2,583.7 L715.1,584.5 L713.9,585.3 L712.7,586.0 L711.5,586.8 L710.3,587.6 L709.1,588.4 L707.8,589.3 L706.5,590.2 L705.1,591.1 L703.6,592.2 L702.0,593.4 L700.3,594.8 L698.3,596.4 L698.3,596.4 L698.6,597.3 L698.9,598.1 L699.5,598.5 L700.2,598.9 L700.9,599.1 L701.7,599.2 L702.6,599.2 L703.5,599.2 L704.4,599.1 L705.4,598.9 L706.4,598.8 L707.4,598.6 L708.4,598.4 L709.3,598.2 L710.3,598.0 L711.3,597.8 L712.3,597.6 L713.2,597.4 L714.2,597.2 L715.2,597.0 L716.2,596.7 L717.2,596.4 L718.3,596.1 L719.3,595.7 L720.3,595.3 L721.4,594.9 L722.4,594.5 L723.5,594.0 L724.5,593.6 L725.6,593.1 L728.0,592.0 L730.4,590.7 L732.8,589.3 L735.2,587.9 L737.7,586.3 L740.1,584.7 L742.5,582.9 L744.8,581.1 L747.2,579.2 L749.5,577.2 L751.8,575.2 L754.1,573.0 L756.4,570.8 L758.6,568.4 L760.8,566.0 L762.9,563.6 L765.0,561.0 L767.1,558.4 L769.1,555.7 L771.1,552.9 L773.0,550.1 L774.9,547.2 L776.7,544.2 L778.5,541.2 L780.2,538.1 L781.8,534.9 L783.4,531.7 L784.9,528.4 L786.4,525.0 L787.8,521.6 L789.1,518.1 L790.3,514.6 L791.5,511.0 L792.6,507.3 L793.6,503.6 L794.6,499.9 L795.5,496.1 L796.2,492.3 L797.0,488.4 L797.6,484.4 L798.1,480.5 L798.6,476.5 L799.0,472.4 L799.2,468.4 L799.4,464.2 L799.5,460.1 L799.5,455.9 L799.5,451.7 L799.3,447.5 L799.0,443.2 L798.6,438.9 L798.1,434.6 L797.6,430.3 L796.9,425.9 L796.1,421.6 L795.2,417.2 L794.3,412.8 L793.2,408.5 L792.0,404.1 L790.7,399.7 L789.3,395.3 L787.8,390.9 L786.2,386.5 L784.5,382.2 L782.7,377.8 L780.7,373.4 L778.7,369.1 L776.6,364.8 L774.3,360.5 L771.9,356.2 L769.5,352.0 L766.9,347.8 L764.2,343.6 L761.4,339.4 L758.5,335.3 L755.6,331.2 L752.4,327.2 L749.2,323.2 L745.9,319.3 L742.5,315.4 L739.0,311.5 L735.4,307.7 L731.6,304.0 L727.8,300.3 L723.9,296.7 L719.9,293.2 L715.7,289.7 L711.5,286.3 L707.2,282.9 L702.8,279.7 L698.3,276.5 L693.7,273.4 L689.0,270.4 L684.2,267.4 L679.4,264.6 L674.4,261.8 L669.4,259.1 L664.3,256.6 L659.1,254.1 L653.9,251.7 L648.5,249.4 L643.1,247.2 L637.6,245.2 L632.1,243.2 L626.4,241.3 L620.7,239.6 L615.0,237.9 L609.2,236.4 L603.3,235.0 L597.4,233.7 L591.4,232.5 L585.4,231.4 L579.4,230.5 L573.3,229.7 L567.2,229.0 L561.0,228.4 L554.8,227.9 L548.8,227.6 L542.8,227.3 L542.8,227.3 L549.6,227.4 L556.3,227.7 L562.8,228.1 L569.2,228.7 L575.6,229.4 L581.9,230.2 L588.1,231.2 L594.3,232.3 L600.4,233.5 L606.5,234.9 L612.5,236.4 L618.4,237.9 L624.2,239.7 L630.0,241.5 L635.7,243.4 L641.4,245.5 L646.9,247.6 L652.4,249.9 L657.9,252.3 L663.2,254.8 L668.5,257.3 L673.6,260.0 L678.7,262.8 L683.7,265.7 L688.6,268.6 L693.4,271.7 L698.2,274.8 L702.8,278.0 L707.3,281.3 L711.8,284.7 L716.1,288.1 L720.3,291.6 L724.5,295.2 L728.5,298.9 L732.5,302.6 L736.3,306.4 L740.0,310.3 L743.7,314.2 L747.2,318.2 L750.6,322.2 L753.9,326.3 L757.1,330.4 L760.2,334.6 L763.2,338.8 L766.1,343.0 L768.8,347.3 L771.5,351.6 L774.1,356.0 L776.5,360.4 L778.8,364.8 L781.0,369.2 L783.1,373.7 L785.1,378.2 L787.0,382.7 L788.8,387.2 L790.5,391.7 L792.0,396.2 L793.5,400.7 L794.8,405.3 L796.0,409.8 L797.2,414.4 L798.2,418.9 L799.1,423.4 L799.9,428.0 L800.6,432.5 L801.2,437.0 L801.6,441.4 L802.0,445.9 L802.3,450.3 L802.5,454.8 L802.6,459.2 L802.5,463.5 L802.4,467.9 L802.2,472.2 L801.9,476.4 L801.5,480.7 L801.0,484.9 L800.4,489.0 L799.7,493.2 L798.9,497.2 L798.0,501.2 L797.1,505.2 L796.0,509.1 L794.9,513.0 L793.7,516.8 L792.4,520.5 L791.1,524.2 L789.6,527.9 L788.1,531.4 L786.6,535.0 L784.9,538.4 L783.2,541.8 L781.4,545.1 L779.5,548.4 L777.6,551.6 L775.7,554.7 L773.6,557.7 L771.5,560.7 L769.4,563.6 L767.2,566.4 L764.9,569.2 L762.6,571.9 L760.3,574.5 L757.9,577.0 L755.4,579.5 L753.0,581.8 L750.4,584.1 L747.9,586.4 L745.3,588.5 L742.6,590.6 L740.0,592.7 L737.3,594.6 L734.5,596.5 L731.7,598.3 L728.9,600.0 L726.1,601.7 L723.2,603.3 L720.3,604.8 L717.4,606.3 L716.0,606.9 L714.7,607.5 L713.4,608.2 L712.0,608.8 L710.7,609.3 L709.3,609.9 L708.0,610.5 L706.6,611.0 L705.2,611.6 L703.8,612.1 L702.4,612.6 L701.0,613.2 L699.5,613.7 L698.1,614.2 L696.6,614.7 L695.2,615.1 L693.8,615.5 L692.3,615.9 L690.9,616.2 L689.5,616.6 L688.1,616.9 L686.6,617.3 L685.1,617.6 L683.5,618.0 L681.9,618.4 L680.1,618.8 L678.2,619.4 L676.2,619.9 L673.9,620.6 L671.3,621.4 L671.3,621.4 L671.0,622.4 L670.9,623.2 L671.1,623.8 L671.4,624.3 L671.9,624.8 L672.6,625.2 L673.3,625.5 L674.1,625.8 L675.0,626.0 L675.9,626.2 L676.8,626.4 L677.7,626.6 L678.6,626.8 L679.6,627.0 L680.5,627.2 L681.4,627.3 L682.3,627.5 L683.2,627.7 L684.2,627.8 L685.1,628.0 L686.1,628.1 L687.1,628.2 L688.1,628.2 L689.2,628.3 L690.2,628.3 L691.3,628.3 L692.3,628.3 L693.4,628.3 L694.5,628.2 L695.6,628.2 L698.2,628.0 L700.8,627.7 L703.5,627.4 L706.1,626.9 L708.8,626.4 L711.6,625.8 L714.3,625.2 L717.1,624.4 L719.8,623.6 L722.6,622.7 L725.4,621.7 L728.2,620.6 L731.0,619.5 L733.8,618.3 L736.6,617.0 L739.4,615.6 L742.2,614.1 L745.0,612.6 L747.8,610.9 L750.5,609.2 L753.2,607.5 L756.0,605.6 L758.7,603.7 L761.4,601.6 L764.0,599.5 L766.7,597.3 L769.3,595.1 L771.8,592.7 L774.4,590.3 L776.9,587.8 L779.4,585.2 L781.8,582.5 L784.2,579.7 L786.6,576.9 L788.9,574.0 L791.1,571.0 L793.3,567.9 L795.5,564.8 L797.6,561.6 L799.7,558.3 L801.6,554.9 L803.6,551.5 L805.4,548.0 L807.2,544.4 L809.0,540.8 L810.6,537.1 L812.2,533.3 L813.7,529.5 L815.2,525.6 L816.6,521.6 L817.9,517.6 L819.1,513.6 L820.2,509.5 L821.2,505.3 L822.2,501.1 L823.1,496.8 L823.9,492.5 L824.6,488.2 L825.2,483.8 L825.7,479.3 L826.1,474.9 L826.4,470.3 L826.7,465.8 L826.8,461.2 L826.8,456.6 L826.8,452.0 L826.6,447.3 L826.3,442.6 L825.9,437.9 L825.5,433.1 L824.9,428.4 L824.2,423.6 L823.4,418.8 L822.5,414.0 L821.5,409.2 L820.4,404.4 L819.2,399.6 L817.8,394.8 L816.4,390.0 L814.8,385.2 L813.1,380.4 L811.4,375.6 L809.5,370.8 L807.5,366.1 L805.3,361.3 L803.1,356.6 L800.8,351.9 L798.3,347.2 L795.7,342.6 L793.1,337.9 L790.3,333.4 L787.4,328.8 L784.4,324.3 L781.2,319.8 L778.0,315.4 L774.7,311.0 L771.2,306.6 L767.7,302.4 L764.0,298.1 L760.3,294.0 L756.4,289.8 L752.4,285.8 L748.3,281.8 L744.1,277.9 L739.8,274.0 L735.4,270.2 L731.0,266.5 L726.4,262.9 L721.7,259.3 L716.9,255.8 L712.1,252.4 L707.1,249.1 L702.1,245.9 L697.0,242.8 L691.8,239.8 L686.6,236.9 L681.2,234.0 L675.9,231.3 L670.7,228.8 L670.7,228.8 L676.6,231.5 L682.4,234.4 L688.0,237.3 L693.5,240.3 L698.8,243.5 L704.1,246.7 L709.2,250.0 L714.3,253.4 L719.3,256.9 L724.1,260.4 L728.8,264.1 L733.5,267.8 L738.0,271.6 L742.4,275.5 L746.8,279.4 L751.0,283.5 L755.1,287.5 L759.1,291.7 L763.0,295.9 L766.8,300.2 L770.5,304.5 L774.0,308.9 L777.5,313.3 L780.8,317.8 L784.0,322.3 L787.2,326.9 L790.2,331.5 L793.0,336.1 L795.8,340.8 L798.5,345.5 L801.0,350.3 L803.4,355.0 L805.7,359.8 L807.9,364.6 L810.0,369.5 L812.0,374.3 L813.8,379.2 L815.6,384.1 L817.2,388.9 L818.7,393.8 L820.1,398.7 L821.4,403.6 L822.5,408.5 L823.6,413.4 L824.5,418.3 L825.4,423.2 L826.1,428.1 L826.7,432.9 L827.2,437.7 L827.7,442.6 L827.9,447.4 L828.1,452.1 L828.2,456.9 L828.2,461.6 L828.1,466.3 L827.9,471.0 L827.6,475.6 L827.1,480.2 L826.6,484.7 L826.0,489.3 L825.3,493.7 L824.5,498.2 L823.6,502.5 L822.6,506.9 L821.6,511.2 L820.4,515.4 L819.2,519.6 L817.8,523.7 L816.4,527.8 L814.9,531.8 L813.3,535.7 L811.7,539.6 L810.0,543.5 L808.2,547.2 L806.3,550.9 L804.4,554.6 L802.4,558.1 L800.3,561.6 L798.1,565.0 L795.9,568.4 L793.7,571.7 L791.3,574.9 L789.0,578.1 L786.5,581.1 L784.0,584.1 L781.5,587.1 L778.9,589.9 L776.2,592.7 L773.5,595.4 L770.8,598.0 L768.0,600.5 L765.2,603.0 L762.3,605.4 L759.4,607.7 L756.5,609.9 L753.5,612.0 L750.5,614.1 L747.5,616.0 L744.4,617.9 L741.3,619.7 L738.2,621.4 L735.1,623.0 L732.0,624.6 L728.8,626.0 L725.7,627.4 L722.5,628.6 L719.3,629.8 L716.1,630.9 L712.9,632.0 L709.7,632.9 L706.5,633.7 L703.2,634.5 L700.0,635.2 L696.8,635.8 L693.6,636.4 L690.4,636.8 L687.1,637.2 L683.9,637.5 L680.7,637.7 L679.2,637.8 L677.8,637.8 L676.3,637.9 L674.9,637.9 L673.4,637.9 L672.0,637.9 L670.5,637.9 L669.0,637.9 L667.6,637.9 L666.0,637.8 L664.5,637.8 L663.0,637.7 L661.4,637.7 L659.9,637.6 L658.4,637.4 L656.9,637.3 L655.4,637.1 L654.0,636.9 L652.6,636.7 L651.1,636.5 L649.7,636.2 L648.2,636.0 L646.6,635.7 L645.1,635.4 L643.4,635.2 L641.5,634.9 L639.5,634.6 L637.3,634.3 L634.8,634.0 L632.0,633.7 L632.0,633.7 L631.1,634.4 L630.4,635.0 L630.2,635.6 L630.2,636.2 L630.3,636.8 L630.7,637.3 L631.1,637.9 L631.6,638.4 L632.2,639.0 L632.8,639.5 L633.5,640.0 L634.2,640.6 L634.9,641.1 L635.5,641.6 L636.2,642.1 L636.9,642.6 L637.5,643.1 L638.2,643.6 L638.9,644.1 L639.6,644.6 L640.3,645.1 L641.1,645.6 L641.9,646.0 L642.8,646.5 L643.6,646.9 L644.5,647.4 L645.4,647.8 L646.3,648.2 L647.2,648.6 L648.1,649.0 L650.3,649.9 L652.6,650.7 L654.9,651.5 L657.4,652.2 L659.8,652.9 L662.4,653.5 L665.0,654.0 L667.6,654.5 L670.3,654.9 L673.1,655.3 L675.8,655.6 L678.7,655.8 L681.6,655.9 L684.5,656.0 L687.4,656.0 L690.4,656.0 L693.4,655.8 L696.4,655.7 L699.4,655.4 L702.5,655.0 L705.6,654.6 L708.7,654.2 L711.8,653.6 L714.9,653.0 L718.0,652.2 L721.2,651.5 L724.3,650.6 L727.5,649.7 L730.6,648.6 L733.8,647.5 L736.9,646.4 L740.1,645.1 L743.2,643.8 L746.4,642.4 L749.5,640.9 L752.6,639.3 L755.8,637.7 L758.8,635.9 L761.9,634.1 L765.0,632.3 L768.0,630.3 L771.0,628.3 L774.0,626.2 L777.0,624.0 L779.9,621.7 L782.9,619.3 L785.8,616.9 L788.6,614.4 L791.4,611.8 L794.2,609.1 L797.0,606.4 L799.7,603.6 L802.3,600.7 L804.9,597.7 L807.5,594.6 L810.0,591.5 L812.5,588.3 L815.0,585.0 L817.3,581.7 L819.6,578.3 L821.9,574.8 L824.1,571.2 L826.2,567.6 L828.3,563.9 L830.3,560.1 L832.3,556.3 L834.2,552.4 L836.0,548.5 L837.7,544.5 L839.4,540.4 L841.0,536.2 L842.5,532.0 L843.9,527.8 L845.3,523.5 L846.5,519.1 L847.7,514.7 L848.8,510.3 L849.9,505.8 L850.8,501.2 L851.6,496.6 L852.4,492.0 L853.1,487.3 L853.6,482.6 L854.1,477.8 L854.5,473.0 L854.8,468.2 L855.0,463.3 L855.1,458.4 L855.1,453.5 L854.9,448.5 L854.7,443.6 L854.4,438.6 L854.0,433.6 L853.5,428.5 L852.9,423.5 L852.1,418.5 L851.3,413.4 L850.4,408.3 L849.3,403.3 L848.2,398.2 L846.9,393.1 L845.6,388.1 L844.1,383.0 L842.5,377.9 L840.8,372.9 L839.0,367.8 L837.1,362.8 L835.1,357.8 L832.9,352.8 L830.7,347.8 L828.4,342.9 L826.0,338.0 L823.4,333.1 L820.8,328.3 L818.1,323.5 L815.3,318.8 L812.4,314.1 L809.5,309.7 L806.7,305.3 L806.7,305.3 L810.4,310.6 L813.9,315.7 L817.1,320.8 L820.1,325.9 L823.0,330.9 L825.8,336.1 L828.4,341.2 L830.9,346.3 L833.3,351.5 L835.6,356.6 L837.7,361.8 L839.8,367.0 L841.7,372.2 L843.4,377.4 L845.1,382.6 L846.7,387.9 L848.1,393.1 L849.4,398.3 L850.6,403.6 L851.7,408.8 L852.7,414.0 L853.6,419.2 L854.4,424.4 L855.0,429.6 L855.5,434.8 L856.0,439.9 L856.3,445.1 L856.5,450.2 L856.6,455.3 L856.6,460.3 L856.5,465.3 L856.3,470.3 L856.0,475.3 L855.6,480.2 L855.1,485.1 L854.5,490.0 L853.7,494.8 L852.9,499.6 L852.1,504.3 L851.1,509.0 L850.0,513.6 L848.8,518.2 L847.6,522.8 L846.2,527.3 L844.8,531.7 L843.3,536.1 L841.7,540.4 L840.0,544.7 L838.2,548.9 L836.4,553.0 L834.5,557.1 L832.5,561.1 L830.4,565.0 L828.3,568.9 L826.1,572.7 L823.8,576.5 L821.5,580.2 L819.1,583.8 L816.6,587.3 L814.1,590.7 L811.5,594.1 L808.9,597.4 L806.2,600.7 L803.4,603.8 L800.6,606.9 L797.8,609.9 L794.9,612.8 L792.0,615.6 L789.0,618.4 L786.0,621.0 L782.9,623.6 L779.8,626.1 L776.7,628.5 L773.5,630.9 L770.3,633.1 L767.1,635.3 L763.9,637.4 L760.6,639.4 L757.3,641.3 L754.0,643.1 L750.7,644.8 L747.3,646.5 L744.0,648.0 L740.6,649.5 L737.3,650.9 L733.9,652.2 L730.5,653.4 L727.1,654.5 L723.8,655.6 L720.4,656.5 L717.0,657.4 L713.6,658.2 L710.3,658.9 L706.9,659.6 L703.5,660.1 L700.2,660.6 L696.9,661.0 L693.6,661.3 L690.3,661.5 L687.0,661.7 L683.8,661.7 L680.5,661.7 L677.3,661.7 L674.1,661.5 L671.0,661.3 L667.8,661.0 L664.7,660.6 L661.6,660.2 L658.5,659.7 L655.5,659.1 L652.5,658.5 L649.5,657.8 L646.5,657.1 L643.5,656.2 L640.6,655.3 L637.7,654.4 L634.8,653.3 L631.9,652.2 L629.0,651.1 L627.8,650.6 L626.5,650.0 L625.2,649.5 L624.0,648.9 L622.7,648.3 L621.5,647.7 L620.2,647.1 L619.0,646.5 L617.7,645.8 L616.4,645.2 L615.1,644.5 L613.8,643.8 L612.5,643.1 L611.2,642.4 L609.9,641.6 L608.7,640.9 L607.5,640.1 L606.4,639.4 L605.2,638.6 L604.0,637.8 L602.9,637.0 L601.7,636.1 L600.5,635.3 L599.2,634.4 L597.8,633.4 L596.3,632.4 L594.6,631.4 L592.8,630.2 L590.6,628.9 L588.2,627.4 L588.2,627.4 L586.9,627.5 L586.0,627.7 L585.5,628.1 L585.1,628.6 L584.9,629.1 L584.8,629.7 L584.9,630.4 L585.1,631.1 L585.3,631.7 L585.5,632.5 L585.8,633.2 L586.1,633.9 L586.5,634.6 L586.8,635.3 L587.1,636.1 L587.4,636.8 L587.7,637.5 L588.0,638.2 L588.3,638.9 L588.6,639.6 L589.0,640.3 L589.4,641.0 L589.9,641.7 L590.3,642.5 L590.8,643.2 L591.3,644.0 L591.9,644.7 L592.4,645.4 L593.0,646.2 L593.5,646.9 L594.9,648.6 L596.4,650.3 L598.0,651.9 L599.6,653.6 L601.3,655.2 L603.1,656.8 L604.9,658.4 L606.8,659.9 L608.8,661.5 L610.8,662.9 L612.9,664.4 L615.0,665.8 L617.2,667.2 L619.5,668.6 L621.8,669.9 L624.1,671.2 L626.5,672.5 L629.0,673.7 L631.5,674.8 L634.0,675.9 L636.6,677.0 L639.3,678.0 L642.0,679.0 L644.7,679.9 L647.5,680.7 L650.4,681.5 L653.2,682.3 L656.2,683.0 L659.1,683.6 L662.1,684.2 L665.2,684.7 L668.3,685.2 L671.4,685.6 L674.5,685.9 L677.7,686.1 L681.0,686.3 L684.2,686.4 L687.5,686.5 L690.8,686.5 L694.1,686.4 L697.5,686.2 L700.9,686.0 L704.3,685.7 L707.7,685.3 L711.2,684.8 L714.7,684.3 L718.1,683.7 L721.6,683.0 L725.1,682.2 L728.6,681.4 L732.1,680.4 L735.6,679.4 L739.1,678.4 L742.6,677.2 L746.1,676.0 L749.7,674.6 L753.2,673.2 L756.7,671.7 L760.1,670.2 L763.6,668.5 L767.1,666.8 L770.5,665.0 L774.0,663.1 L777.4,661.1 L780.8,659.1 L784.2,656.9 L787.5,654.7 L790.9,652.4 L794.2,650.0 L797.4,647.6 L800.7,645.0 L803.9,642.4 L807.1,639.7 L810.2,636.9 L813.3,634.1 L816.4,631.1 L819.4,628.1 L822.4,625.0 L825.3,621.8 L828.2,618.6 L831.0,615.3 L833.8,611.9 L836.6,608.4 L839.2,604.8 L841.9,601.2 L844.4,597.5 L846.9,593.8 L849.4,589.9 L851.8,586.0 L854.1,582.1 L856.3,578.0 L858.5,573.9 L860.6,569.8 L862.7,565.5 L864.6,561.3 L866.5,556.9 L868.3,552.5 L870.1,548.1 L871.7,543.6 L873.3,539.0 L874.8,534.4 L876.2,529.7 L877.6,525.0 L878.8,520.2 L880.0,515.4 L881.0,510.5 L882.0,505.6 L882.9,500.7 L883.7,495.7 L884.4,490.7 L885.0,485.7 L885.6,480.6 L886.0,475.5 L886.3,470.4 L886.6,465.3 L886.7,460.1 L886.8,455.0 L886.8,449.9 L886.7,444.9 L886.7,444.9 L886.9,450.7 L887.1,456.3 L887.0,461.7 L886.9,467.1 L886.7,472.4 L886.3,477.7 L885.9,483.0 L885.3,488.2 L884.7,493.4 L883.9,498.5 L883.1,503.6 L882.1,508.7 L881.1,513.7 L880.0,518.6 L878.7,523.5 L877.4,528.3 L876.0,533.1 L874.6,537.9 L873.0,542.6 L871.3,547.2 L869.6,551.8 L867.8,556.3 L865.9,560.8 L863.9,565.1 L861.9,569.5 L859.7,573.7 L857.5,577.9 L855.3,582.1 L852.9,586.1 L850.5,590.1 L848.1,594.0 L845.5,597.9 L842.9,601.7 L840.3,605.4 L837.5,609.0 L834.8,612.6 L831.9,616.1 L829.1,619.5 L826.1,622.8 L823.1,626.1 L820.1,629.2 L817.0,632.4 L813.9,635.4 L810.7,638.3 L807.5,641.2 L804.3,644.0 L801.0,646.6 L797.7,649.3 L794.3,651.8 L790.9,654.2 L787.5,656.6 L784.1,658.9 L780.6,661.1 L777.1,663.2 L773.6,665.2 L770.1,667.2 L766.5,669.1 L762.9,670.8 L759.3,672.5 L755.7,674.1 L752.1,675.7 L748.5,677.1 L744.9,678.5 L741.3,679.8 L737.6,681.0 L734.0,682.1 L730.4,683.1 L726.7,684.0 L723.1,684.9 L719.5,685.7 L715.8,686.4 L712.2,687.0 L708.6,687.6 L705.0,688.0 L701.5,688.4 L697.9,688.7 L694.3,689.0 L690.8,689.1 L687.3,689.2 L683.8,689.2 L680.3,689.1 L676.9,689.0 L673.4,688.8 L670.0,688.5 L666.7,688.2 L663.3,687.7 L660.0,687.2 L656.7,686.7 L653.4,686.1 L650.2,685.4 L647.0,684.6 L643.8,683.8 L640.7,682.9 L637.6,681.9 L634.5,680.9 L631.5,679.8 L628.5,678.7 L625.6,677.5 L622.7,676.2 L619.9,674.9 L617.1,673.6 L614.3,672.1 L611.6,670.7 L609.0,669.1 L606.4,667.5 L603.9,665.9 L601.4,664.2 L599.0,662.5 L596.6,660.8 L594.2,658.9 L592.0,657.1 L589.7,655.2 L587.5,653.2 L585.4,651.2 L583.4,649.2 L581.4,647.1 L579.4,645.0 L577.5,642.9 L575.6,640.7 L574.7,639.7 L573.9,638.7 L573.1,637.7 L572.3,636.7 L571.5,635.6 L570.7,634.6 L569.9,633.5 L569.1,632.5 L568.3,631.4 L567.5,630.3 L566.7,629.2 L565.9,628.0 L565.1,626.9 L564.3,625.7 L563.6,624.6 L562.9,623.4 L562.2,622.3 L561.5,621.1 L560.9,620.0 L560.2,618.8 L559.6,617.7 L558.9,616.4 L558.3,615.2 L557.6,613.9 L556.8,612.5 L555.9,611.1 L554.9,609.5 L553.8,607.7 L552.5,605.7 L551.0,603.4 L551.0,603.4 L549.8,603.1 L548.8,603.0 L548.1,603.1 L547.5,603.4 L547.1,603.8 L546.8,604.3 L546.5,604.9 L546.3,605.6 L546.2,606.3 L546.1,607.0 L546.0,607.8 L545.9,608.6 L545.9,609.4 L545.8,610.1 L545.8,610.9 L545.7,611.6 L545.6,612.4 L545.6,613.2 L545.5,613.9 L545.5,614.7 L545.5,615.5 L545.5,616.3 L545.5,617.2 L545.6,618.0 L545.7,618.9 L545.8,619.8 L545.9,620.6 L546.1,621.5 L546.2,622.4 L546.4,623.3 L546.8,625.4 L547.3,627.5 L548.0,629.7 L548.6,631.8 L549.4,634.0 L550.2,636.2 L551.2,638.4 L552.1,640.6 L553.2,642.9 L554.3,645.1 L555.5,647.3 L556.8,649.5 L558.1,651.7 L559.5,653.9 L561.0,656.1 L562.5,658.3 L564.1,660.5 L565.7,662.6 L567.4,664.8 L569.2,666.9 L571.1,669.0 L573.0,671.0 L574.9,673.1 L577.0,675.1 L579.0,677.1 L581.2,679.0 L583.4,681.0 L585.7,682.9 L588.0,684.7 L590.4,686.5 L592.8,688.3 L595.3,690.1 L597.8,691.8 L600.4,693.5 L603.1,695.1 L605.8,696.7 L608.5,698.2 L611.3,699.7 L614.2,701.1 L617.1,702.5 L620.0,703.9 L623.0,705.1 L626.1,706.4 L629.2,707.6 L632.3,708.7 L635.5,709.8 L638.7,710.8 L642.0,711.7 L645.3,712.6 L648.6,713.4 L652.0,714.2 L655.5,714.9 L658.9,715.5 L662.4,716.1 L666.0,716.6 L669.6,717.0 L673.2,717.4 L676.8,717.7 L680.5,717.9 L684.2,718.1 L687.9,718.2 L691.6,718.2 L695.4,718.1 L699.2,717.9 L703.0,717.7 L706.8,717.4 L710.7,717.0 L714.5,716.5 L718.4,716.0 L722.3,715.4 L726.2,714.7 L730.1,713.9 L734.0,713.0 L738.0,712.1 L741.9,711.0 L745.8,709.9 L749.8,708.7 L753.7,707.4 L757.6,706.1 L761.5,704.6 L765.4,703.1 L769.3,701.4 L773.2,699.7 L777.1,697.9 L781.0,696.0 L784.9,694.1 L788.7,692.0 L792.5,689.9 L796.3,687.6 L800.1,685.3 L803.8,682.9 L807.5,680.4 L811.2,677.9 L814.9,675.2 L818.5,672.5 L822.1,669.7 L825.6,666.8 L829.2,663.8 L832.6,660.7 L836.1,657.6 L839.4,654.4 L842.8,651.1 L846.1,647.7 L849.3,644.2 L852.5,640.7 L855.7,637.1 L858.7,633.4 L861.8,629.6 L864.7,625.8 L867.7,621.9 L870.5,617.9 L873.3,613.9 L876.0,609.8 L878.6,605.6 L881.2,601.4 L883.7,597.1 L886.2,592.8 L888.5,588.6 L890.7,584.5 L890.7,584.5 L888.3,589.6 L885.8,594.4 L883.3,599.1 L880.6,603.6 L878.0,608.1 L875.2,612.5 L872.4,616.7 L869.5,620.9 L866.5,625.1 L863.5,629.1 L860.4,633.0 L857.3,636.9 L854.1,640.6 L850.8,644.3 L847.5,647.9 L844.2,651.5 L840.8,654.9 L837.3,658.2 L833.8,661.5 L830.3,664.7 L826.7,667.8 L823.0,670.8 L819.3,673.8 L815.6,676.6 L811.9,679.3 L808.1,682.0 L804.3,684.6 L800.5,687.1 L796.6,689.5 L792.7,691.8 L788.8,694.0 L784.9,696.1 L780.9,698.1 L776.9,700.1 L772.9,701.9 L768.9,703.7 L764.9,705.4 L760.9,707.0 L756.8,708.5 L752.8,709.9 L748.7,711.3 L744.7,712.5 L740.6,713.7 L736.6,714.7 L732.5,715.7 L728.5,716.6 L724.4,717.4 L720.4,718.1 L716.3,718.8 L712.3,719.3 L708.3,719.8 L704.3,720.2 L700.3,720.5 L696.4,720.7 L692.4,720.9 L688.5,720.9 L684.6,720.9 L680.7,720.8 L676.8,720.7 L673.0,720.4 L669.2,720.1 L665.4,719.7 L661.7,719.2 L658.0,718.7 L654.3,718.1 L650.7,717.4 L647.1,716.6 L643.5,715.8 L640.0,714.9 L636.5,713.9 L633.0,712.9 L629.6,711.8 L626.3,710.6 L622.9,709.4 L619.7,708.1 L616.5,706.8 L613.3,705.4 L610.2,703.9 L607.1,702.4 L604.1,700.8 L601.1,699.2 L598.2,697.5 L595.4,695.8 L592.6,694.0 L589.9,692.2 L587.2,690.3 L584.6,688.4 L582.0,686.4 L579.5,684.4 L577.1,682.4 L574.7,680.3 L572.4,678.2 L570.2,676.1 L568.0,673.9 L565.8,671.7 L563.8,669.4 L561.8,667.2 L559.9,664.9 L558.0,662.5 L556.2,660.2 L554.4,657.8 L552.8,655.4 L551.1,653.0 L549.6,650.5 L548.1,648.1 L546.7,645.6 L545.3,643.1 L544.0,640.6 L542.8,638.1 L541.6,635.5 L540.5,633.0 L539.4,630.4 L538.4,627.8 L537.4,625.2 L536.5,622.6 L535.6,619.9 L534.8,617.3 L534.1,614.6 L533.4,611.9 L533.1,610.6 L532.8,609.4 L532.5,608.2 L532.2,607.0 L532.0,605.8 L531.7,604.5 L531.5,603.3 L531.2,602.1 L531.0,600.8 L530.7,599.5 L530.5,598.2 L530.3,596.9 L530.1,595.6 L529.9,594.3 L529.7,593.0 L529.5,591.7 L529.4,590.4 L529.3,589.2 L529.2,587.9 L529.1,586.6 L529.1,585.3 L529.0,584.0 L528.9,582.7 L528.8,581.3 L528.7,579.8 L528.5,578.2 L528.3,576.4 L528.0,574.6 L527.6,572.3 L527.1,569.9 L527.1,569.9 L526.1,569.3 L525.2,569.0 L524.5,569.0 L523.8,569.1 L523.2,569.4 L522.7,569.8 L522.2,570.4 L521.7,571.0 L521.3,571.6 L520.9,572.3 L520.5,573.0 L520.1,573.8 L519.7,574.5 L519.3,575.2 L518.9,576.0 L518.5,576.7 L518.2,577.4 L517.8,578.2 L517.4,578.9 L517.1,579.7 L516.7,580.5 L516.4,581.3 L516.1,582.1 L515.8,583.0 L515.5,583.9 L515.3,584.8 L515.0,585.7 L514.8,586.6 L514.6,587.5 L514.4,588.5 L513.9,590.7 L513.5,592.9 L513.2,595.2 L513.0,597.6 L512.8,600.0 L512.7,602.4 L512.6,604.9 L512.6,607.4 L512.7,609.9 L512.8,612.4 L513.0,615.0 L513.3,617.6 L513.6,620.2 L514.0,622.8 L514.4,625.5 L515.0,628.1 L515.5,630.8 L516.2,633.5 L516.9,636.2 L517.7,638.9 L518.5,641.6 L519.5,644.3 L520.4,647.0 L521.5,649.7 L522.6,652.5 L523.8,655.2 L525.1,657.9 L526.5,660.6 L527.9,663.3 L529.4,666.0 L530.9,668.7 L532.6,671.4 L534.3,674.0 L536.1,676.7 L537.9,679.3 L539.9,681.9 L541.9,684.5 L543.9,687.1 L546.1,689.6 L548.3,692.1 L550.6,694.6 L553.0,697.1 L555.4,699.5 L557.9,701.9 L560.5,704.2 L563.1,706.5 L565.8,708.8 L568.6,711.0 L571.4,713.2 L574.3,715.4 L577.3,717.5 L580.3,719.5 L583.4,721.5 L586.6,723.4 L589.8,725.3 L593.1,727.2 L596.4,729.0 L599.8,730.7 L603.2,732.4 L606.7,734.0 L610.3,735.5 L613.9,737.0 L617.6,738.4 L621.3,739.8 L625.0,741.0 L628.9,742.3 L632.7,743.4 L636.6,744.5 L640.6,745.5 L644.6,746.4 L648.6,747.2 L652.7,748.0 L656.8,748.7 L661.0,749.3 L665.2,749.9 L669.4,750.3 L673.7,750.7 L677.9,751.0 L682.3,751.2 L686.6,751.3 L691.0,751.3 L695.4,751.3 L699.8,751.1 L704.3,750.9 L708.7,750.6 L713.2,750.1 L717.7,749.6 L722.2,749.0 L726.7,748.3 L731.3,747.6 L735.8,746.7 L740.4,745.7 L744.9,744.6 L749.5,743.5 L754.0,742.2 L758.6,740.9 L763.1,739.4 L767.7,737.9 L772.2,736.2 L776.7,734.5 L781.2,732.7 L785.7,730.7 L790.2,728.7 L794.6,726.6 L799.1,724.3 L803.5,722.0 L807.9,719.6 L812.3,717.1 L816.6,714.5 L820.9,711.8 L825.2,709.0 L829.4,706.1 L833.6,703.1 L837.8,700.0 L841.9,696.9 L845.9,693.6 L850.0,690.3 L853.9,686.9 L857.8,683.5 L857.8,683.5 L853.7,687.3 L849.6,690.9 L845.5,694.4 L841.4,697.8 L837.2,701.0 L832.9,704.2 L828.7,707.2 L824.4,710.2 L820.0,713.0 L815.6,715.8 L811.2,718.4 L806.8,721.0 L802.4,723.4 L797.9,725.8 L793.4,728.0 L788.9,730.1 L784.3,732.2 L779.8,734.1 L775.2,736.0 L770.6,737.7 L766.0,739.4 L761.4,740.9 L756.8,742.4 L752.2,743.7 L747.6,745.0 L743.0,746.1 L738.3,747.2 L733.7,748.1 L729.1,749.0 L724.6,749.8 L720.0,750.4 L715.4,751.0 L710.8,751.5 L706.3,751.9 L701.8,752.2 L697.3,752.4 L692.8,752.5 L688.3,752.5 L683.9,752.5 L679.5,752.3 L675.1,752.1 L670.8,751.8 L666.4,751.4 L662.1,750.9 L657.9,750.3 L653.7,749.6 L649.5,748.9 L645.4,748.1 L641.3,747.2 L637.2,746.2 L633.2,745.2 L629.2,744.0 L625.3,742.8 L621.4,741.6 L617.6,740.2 L613.8,738.8 L610.1,737.3 L606.4,735.8 L602.8,734.2 L599.2,732.5 L595.7,730.7 L592.3,728.9 L588.9,727.1 L585.6,725.2 L582.3,723.2 L579.1,721.2 L575.9,719.1 L572.9,716.9 L569.8,714.8 L566.9,712.5 L564.0,710.2 L561.2,707.9 L558.4,705.5 L555.7,703.1 L553.1,700.7 L550.6,698.2 L548.1,695.7 L545.7,693.1 L543.3,690.5 L541.0,687.9 L538.8,685.2 L536.7,682.5 L534.6,679.8 L532.6,677.0 L530.7,674.2 L528.8,671.4 L527.0,668.6 L525.3,665.8 L523.6,662.9 L522.1,660.0 L520.5,657.1 L519.1,654.2 L517.7,651.3 L516.4,648.3 L515.2,645.4 L514.1,642.4 L513.0,639.5 L512.0,636.5 L511.0,633.5 L510.2,630.5 L509.4,627.6 L508.7,624.6 L508.0,621.6 L507.4,618.7 L506.9,615.7 L506.5,612.8 L506.1,609.8 L505.8,606.9 L505.6,604.0 L505.4,601.0 L505.3,598.1 L505.2,595.2 L505.3,592.4 L505.4,589.5 L505.5,586.7 L505.7,583.8 L506.0,581.0 L506.3,578.2 L506.7,575.4 L506.9,574.1 L507.1,572.9 L507.3,571.6 L507.5,570.4 L507.7,569.1 L508.0,567.9 L508.2,566.7 L508.5,565.4 L508.7,564.2 L509.0,562.9 L509.3,561.6 L509.5,560.3 L509.8,559.0 L510.1,557.7 L510.5,556.4 L510.8,555.2 L511.2,554.0 L511.6,552.7 L512.0,551.5 L512.4,550.3 L512.8,549.1 L513.2,547.9 L513.6,546.6 L514.1,545.3 L514.5,543.9 L514.9,542.4 L515.3,540.7 L515.7,539.0 L516.1,536.9 L516.5,534.6 L516.5,534.6 L515.7,533.9 L514.9,533.4 L514.1,533.3 L513.4,533.4 L512.7,533.6 L512.0,533.9 L511.3,534.3 L510.6,534.8 L509.9,535.4 L509.2,535.9 L508.6,536.5 L507.9,537.2 L507.2,537.8 L506.6,538.5 L505.9,539.1 L505.3,539.8 L504.6,540.4 L504.0,541.1 L503.3,541.7 L502.7,542.4 L502.1,543.2 L501.5,543.9 L500.9,544.7 L500.3,545.5 L499.7,546.3 L499.1,547.2 L498.5,548.0 L497.9,548.9 L497.4,549.8 L496.8,550.7 L495.6,552.8 L494.5,555.0 L493.4,557.3 L492.3,559.7 L491.3,562.1 L490.3,564.6 L489.4,567.1 L488.6,569.7 L487.8,572.3 L487.1,575.0 L486.4,577.8 L485.8,580.6 L485.3,583.4 L484.8,586.3 L484.4,589.2 L484.1,592.1 L483.8,595.1 L483.6,598.2 L483.5,601.2 L483.4,604.3 L483.5,607.4 L483.5,610.5 L483.7,613.7 L483.9,616.9 L484.2,620.1 L484.6,623.3 L485.0,626.5 L485.6,629.8 L486.2,633.0 L486.9,636.3 L487.6,639.6 L488.5,642.9 L489.4,646.2 L490.4,649.5 L491.5,652.8 L492.6,656.1 L493.9,659.4 L495.2,662.7 L496.6,666.0 L498.1,669.3 L499.7,672.5 L501.3,675.8 L503.0,679.1 L504.8,682.3 L506.7,685.5 L508.7,688.7 L510.8,691.9 L512.9,695.0 L515.2,698.2 L517.5,701.3 L519.9,704.4 L522.3,707.4 L524.9,710.4 L527.5,713.4 L530.3,716.3 L533.1,719.2 L535.9,722.1 L538.9,724.9 L541.9,727.7 L545.1,730.4 L548.3,733.1 L551.5,735.7 L554.9,738.3 L558.3,740.8 L561.8,743.3 L565.4,745.7 L569.0,748.0 L572.8,750.3 L576.5,752.5 L580.4,754.7 L584.3,756.8 L588.3,758.8 L592.4,760.7 L596.5,762.6 L600.7,764.4 L604.9,766.1 L609.2,767.7 L613.6,769.3 L618.0,770.8 L622.5,772.1 L627.0,773.5 L631.6,774.7 L636.3,775.8 L640.9,776.9 L645.7,777.8 L650.4,778.7 L655.3,779.4 L660.1,780.1 L665.0,780.7 L670.0,781.2 L675.0,781.5 L680.0,781.8 L685.0,782.0 L690.1,782.1 L695.2,782.0 L700.3,781.9 L705.4,781.7 L710.6,781.3 L715.8,780.9 L721.0,780.4 L726.2,779.7 L731.4,778.9 L736.6,778.0 L741.9,777.1 L747.1,775.9 L752.4,774.7 L757.6,773.4 L762.9,772.0 L768.1,770.4 L773.4,768.8 L778.6,767.0 L783.8,765.1 L789.0,763.2 L794.2,761.1 L799.3,758.9 L804.4,756.6 L809.5,754.2 L814.6,751.7 L819.5,749.2 L819.5,749.2 L814.2,752.1 L809.0,754.9 L803.7,757.4 L798.5,759.9 L793.2,762.2 L787.9,764.3 L782.6,766.4 L777.3,768.3 L772.0,770.1 L766.6,771.8 L761.3,773.4 L756.0,774.9 L750.6,776.2 L745.3,777.4 L740.0,778.5 L734.6,779.5 L729.3,780.4 L724.0,781.2 L718.7,781.8 L713.4,782.4 L708.1,782.8 L702.9,783.1 L697.7,783.3 L692.5,783.5 L687.3,783.5 L682.1,783.3 L677.0,783.1 L671.9,782.8 L666.9,782.4 L661.9,781.9 L656.9,781.3 L652.0,780.5 L647.1,779.7 L642.2,778.8 L637.4,777.8 L632.7,776.7 L628.0,775.5 L623.3,774.3 L618.7,772.9 L614.1,771.4 L609.7,769.9 L605.2,768.3 L600.8,766.6 L596.5,764.8 L592.3,762.9 L588.1,760.9 L583.9,758.9 L579.9,756.8 L575.9,754.7 L572.0,752.4 L568.1,750.1 L564.3,747.7 L560.6,745.3 L557.0,742.8 L553.4,740.2 L549.9,737.6 L546.5,734.9 L543.2,732.2 L539.9,729.4 L536.7,726.6 L533.6,723.7 L530.6,720.7 L527.7,717.7 L524.8,714.7 L522.1,711.6 L519.4,708.5 L516.8,705.4 L514.2,702.2 L511.8,699.0 L509.5,695.7 L507.2,692.4 L505.0,689.1 L502.9,685.8 L500.9,682.4 L499.0,679.1 L497.1,675.7 L495.4,672.2 L493.7,668.8 L492.1,665.4 L490.6,661.9 L489.2,658.4 L487.9,655.0 L486.7,651.5 L485.5,648.0 L484.5,644.6 L483.5,641.1 L482.6,637.6 L481.8,634.1 L481.1,630.7 L480.4,627.2 L479.9,623.8 L479.4,620.4 L479.0,616.9 L478.7,613.5 L478.4,610.2 L478.3,606.8 L478.2,603.5 L478.2,600.1 L478.3,596.8 L478.4,593.6 L478.6,590.3 L478.9,587.1 L479.3,583.9 L479.7,580.8 L480.2,577.7 L480.8,574.6 L481.4,571.5 L482.1,568.5 L482.9,565.5 L483.7,562.5 L484.6,559.6 L485.5,556.7 L486.5,553.8 L487.6,551.0 L488.7,548.2 L489.9,545.4 L491.1,542.7 L492.4,540.0 L493.8,537.3 L494.4,536.1 L495.0,534.9 L495.6,533.8 L496.3,532.6 L496.9,531.4 L497.6,530.3 L498.3,529.1 L498.9,528.0 L499.6,526.8 L500.3,525.6 L501.0,524.5 L501.8,523.3 L502.5,522.1 L503.3,520.9 L504.0,519.8 L504.8,518.7 L505.6,517.6 L506.4,516.6 L507.2,515.5 L508.0,514.4 L508.9,513.4 L509.7,512.3 L510.6,511.2 L511.4,510.1 L512.3,508.9 L513.3,507.6 L514.2,506.1 L515.3,504.6 L516.3,502.7 L517.5,500.7 L517.5,500.7 L516.9,499.9 L516.2,499.4 L515.5,499.1 L514.7,499.0 L513.9,499.0 L513.1,499.2 L512.3,499.4 L511.4,499.7 L510.5,500.1 L509.7,500.5 L508.8,500.9 L507.9,501.4 L507.1,501.9 L506.2,502.4 L505.3,502.8 L504.4,503.3 L503.6,503.8 L502.7,504.3 L501.9,504.8 L501.0,505.3 L500.1,505.9 L499.3,506.5 L498.4,507.1 L497.6,507.8 L496.7,508.4 L495.8,509.1 L495.0,509.8 L494.1,510.6 L493.3,511.3 L492.4,512.1 L490.6,513.9 L488.7,515.8 L486.8,517.8 L485.0,519.9 L483.3,522.0 L481.5,524.3 L479.8,526.6 L478.1,528.9 L476.5,531.4 L475.0,533.9 L473.4,536.4 L471.9,539.1 L470.5,541.8 L469.1,544.5 L467.8,547.4 L466.6,550.2 L465.4,553.2 L464.2,556.2 L463.1,559.2 L462.1,562.3 L461.1,565.5 L460.2,568.7 L459.4,571.9 L458.7,575.2 L458.0,578.6 L457.4,582.0 L456.9,585.4 L456.4,588.9 L456.0,592.4 L455.7,596.0 L455.5,599.6 L455.4,603.2 L455.3,606.9 L455.4,610.6 L455.5,614.3 L455.7,618.1 L456.0,621.9 L456.4,625.7 L456.8,629.5 L457.4,633.4 L458.1,637.2 L458.8,641.1 L459.7,645.0 L460.6,648.9 L461.6,652.8 L462.8,656.7 L464.0,660.6 L465.3,664.5 L466.7,668.4 L468.3,672.3 L469.9,676.2 L471.6,680.1 L473.4,684.0 L475.3,687.8 L477.3,691.6 L479.4,695.5 L481.6,699.3 L483.9,703.0 L486.2,706.8 L488.7,710.5 L491.3,714.2 L494.0,717.8 L496.8,721.5 L499.6,725.0 L502.6,728.6 L505.7,732.1 L508.8,735.5 L512.1,738.9 L515.4,742.3 L518.9,745.6 L522.4,748.8 L526.0,752.0 L529.7,755.1 L533.5,758.2 L537.4,761.2 L541.4,764.1 L545.5,767.0 L549.6,769.8 L553.8,772.5 L558.1,775.2 L562.5,777.7 L567.0,780.2 L571.5,782.6 L576.2,785.0 L580.9,787.2 L585.6,789.4 L590.5,791.4 L595.4,793.4 L600.4,795.3 L605.4,797.0 L610.5,798.7 L615.7,800.3 L620.9,801.8 L626.2,803.2 L631.5,804.4 L636.9,805.6 L642.4,806.7 L647.9,807.6 L653.4,808.5 L659.0,809.2 L664.7,809.8 L670.3,810.3 L676.0,810.7 L681.8,811.0 L687.6,811.1 L693.4,811.1 L699.2,811.0 L705.1,810.8 L711.0,810.5 L716.9,810.0 L722.8,809.4 L728.7,808.7 L734.7,807.9 L740.6,806.9 L746.6,805.8 L752.5,804.6 L758.5,803.3 L764.4,801.9 L770.2,800.3 L770.2,800.3 L764.0,802.1 L757.9,803.7 L751.8,805.1 L745.8,806.3 L739.7,807.5 L733.7,808.5 L727.6,809.3 L721.6,810.0 L715.6,810.6 L709.7,811.1 L703.7,811.4 L697.8,811.7 L691.9,811.7 L686.0,811.7 L680.2,811.5 L674.4,811.3 L668.6,810.9 L662.9,810.3 L657.2,809.7 L651.5,808.9 L645.9,808.1 L640.4,807.1 L634.9,806.0 L629.4,804.8 L624.0,803.5 L618.7,802.1 L613.4,800.6 L608.2,798.9 L603.1,797.2 L598.0,795.4 L593.0,793.5 L588.0,791.4 L583.2,789.3 L578.4,787.1 L573.6,784.8 L569.0,782.5 L564.4,780.0 L559.9,777.5 L555.5,774.8 L551.1,772.1 L546.9,769.3 L542.7,766.5 L538.6,763.6 L534.6,760.6 L530.7,757.5 L526.9,754.4 L523.1,751.2 L519.5,747.9 L515.9,744.6 L512.5,741.2 L509.1,737.8 L505.9,734.3 L502.7,730.8 L499.6,727.2 L496.6,723.6 L493.7,719.9 L490.9,716.2 L488.3,712.5 L485.7,708.7 L483.2,704.9 L480.8,701.1 L478.5,697.2 L476.3,693.3 L474.2,689.4 L472.2,685.5 L470.3,681.5 L468.5,677.6 L466.8,673.6 L465.2,669.6 L463.7,665.6 L462.3,661.6 L461.0,657.6 L459.7,653.6 L458.6,649.5 L457.6,645.5 L456.7,641.5 L455.9,637.5 L455.1,633.5 L454.5,629.6 L454.0,625.6 L453.5,621.6 L453.2,617.7 L452.9,613.8 L452.7,609.9 L452.6,606.0 L452.6,602.1 L452.7,598.3 L452.9,594.5 L453.1,590.7 L453.5,586.9 L453.9,583.2 L454.4,579.5 L455.0,575.9 L455.6,572.2 L456.4,568.7 L457.2,565.1 L458.1,561.7 L459.1,558.2 L460.1,554.8 L461.2,551.5 L462.4,548.2 L463.7,544.9 L465.0,541.7 L466.4,538.6 L467.9,535.5 L469.4,532.4 L471.0,529.5 L472.6,526.6 L474.3,523.7 L476.1,520.9 L477.9,518.1 L479.8,515.5 L481.7,512.8 L483.7,510.3 L485.7,507.8 L487.8,505.3 L489.9,502.9 L492.1,500.6 L494.3,498.3 L495.3,497.3 L496.3,496.3 L497.4,495.3 L498.4,494.4 L499.4,493.4 L500.5,492.5 L501.5,491.5 L502.6,490.6 L503.7,489.6 L504.8,488.7 L505.9,487.7 L507.0,486.8 L508.2,485.8 L509.3,484.9 L510.5,484.0 L511.6,483.2 L512.8,482.3 L513.9,481.5 L515.1,480.7 L516.3,480.0 L517.5,479.2 L518.7,478.4 L519.9,477.6 L521.2,476.7 L522.5,475.8 L523.9,474.9 L525.4,473.8 L527.0,472.6 L528.7,471.2 L530.7,469.6Z" fill="#f28eb9" stroke="#f28eb9" stroke-width="0.45" stroke-linejoin="round"/></svg>
<div style="position:absolute;left:1166px;top:92px;width:16px;height:913px;background:#2a2a2a;"></div>
<div style="position:absolute;left:1167px;top:536px;width:15px;height:25px;background:#3f3f3f;border-radius:7.5px;"></div>
<svg style="position:absolute;left:1169px;top:96px;" width="11" height="8" viewBox="0 0 11 8"><path d="M1.7 6.2 L5.4 2.6 L9.1 6.2" fill="none" stroke="#707070" stroke-width="1.5"/></svg>
<svg style="position:absolute;left:1169px;top:993px;" width="10" height="7" viewBox="0 0 10 7"><path d="M1.2 1.4 L5 5.2 L8.8 1.4" fill="none" stroke="#a0a0a0" stroke-width="1.5"/></svg>
<div style="position:absolute;left:1182px;top:62px;width:3px;height:960px;background:#2e2e2e;"></div>
<div style="position:absolute;left:1182px;top:62px;width:1px;height:960px;background:#232323;"></div>
<div style="position:absolute;left:1184px;top:62px;width:1px;height:960px;background:#232323;"></div>
<div style="position:absolute;left:1185px;top:62px;width:37px;height:960px;background:#323232;"></div>
<div style="position:absolute;left:1185px;top:62px;width:37px;height:12.5px;background:#272727;"></div>
<div style="position:absolute;left:67px;top:980px;width:1099px;height:2px;background:#2b2b2b;"></div>
<div style="position:absolute;left:67px;top:982px;width:1099px;height:23px;background:#323232;"></div>
<div style="position:absolute;left:68px;top:1005px;width:1098px;height:16px;background:#2b2b2b;"></div>
<div style="position:absolute;left:1166px;top:1005px;width:16px;height:16px;background:#383838;"></div>
<div style="position:absolute;left:3px;top:4px;width:16px;height:15px;background:#330000;border-radius:2.5px;"></div>
<div style="position:absolute;left:6.60px;top:6px;font-size:9.5px;line-height:11px;color:#ff9a00;font-weight:bold;white-space:nowrap;transform-origin:0 0;transform:scaleX(0.9684);">Ai</div>
<svg style="position:absolute;left:32px;top:3px;" width="20" height="17" viewBox="0 0 20 17"><path d="M9.9 0.6 L19 9.6 L16.9 9.6 L16.9 16 L11.9 16 L11.9 10.6 L7.9 10.6 L7.9 16 L2.9 16 L2.9 9.6 L0.8 9.6 Z" fill="#cfcfcf"/></svg>
<div style="position:absolute;left:65px;top:2px;width:2px;height:19px;background:#444;"></div>
<div style="position:absolute;left:82.20px;top:3px;font-size:13px;line-height:16px;color:#e2e2e2;white-space:nowrap;transform-origin:0 0;transform:scaleX(0.8571);">File</div>
<div style="position:absolute;left:115.50px;top:3px;font-size:13px;line-height:16px;color:#e2e2e2;white-space:nowrap;transform-origin:0 0;transform:scaleX(0.8715);">Edit</div>
<div style="position:absolute;left:150.40px;top:3px;font-size:13px;line-height:16px;color:#e2e2e2;white-space:nowrap;transform-origin:0 0;transform:scaleX(0.9090);">Object</div>
<div style="position:absolute;left:200.90px;top:3px;font-size:13px;line-height:16px;color:#e2e2e2;white-space:nowrap;transform-origin:0 0;transform:scaleX(0.8711);">Type</div>
<div style="position:absolute;left:240.20px;top:3px;font-size:13px;line-height:16px;color:#e2e2e2;white-space:nowrap;transform-origin:0 0;transform:scaleX(0.8498);">Select</div>
<div style="position:absolute;left:286.70px;top:3px;font-size:13px;line-height:16px;color:#e2e2e2;white-space:nowrap;transform-origin:0 0;transform:scaleX(0.8879);">Effect</div>
<div style="position:absolute;left:331.40px;top:3px;font-size:13px;line-height:16px;color:#e2e2e2;white-space:nowrap;transform-origin:0 0;transform:scaleX(0.8571);">View</div>
<div style="position:absolute;left:370.50px;top:3px;font-size:13px;line-height:16px;color:#e2e2e2;white-space:nowrap;transform-origin:0 0;transform:scaleX(0.9208);">Window</div>
<div style="position:absolute;left:428.40px;top:3px;font-size:13px;line-height:16px;color:#e2e2e2;white-space:nowrap;transform-origin:0 0;transform:scaleX(0.9196);">Help</div>
<div style="position:absolute;left:464px;top:2px;width:2px;height:19px;background:#444;"></div>
<div style="position:absolute;left:920.4px;top:0px;width:1.3px;height:25px;background:#272727;"></div>
<div style="position:absolute;left:928px;top:-0.6px;width:50.2px;height:23.6px;background:#1473e6;border-radius:11.8px;"></div>
<div style="position:absolute;left:938.10px;top:5px;font-size:12.5px;line-height:15px;color:#fff;white-space:nowrap;transform-origin:0 0;transform:scaleX(0.9049);-webkit-text-stroke:0.35px #fff;">Share</div>
<svg style="position:absolute;left:989px;top:2px;" width="18" height="18" viewBox="0 0 18 18"><path d="M8 2 C5.4 2 4.4 4.4 4.4 6.8 C4.4 9.8 3.4 11.4 2 12.9 L14 12.9 C12.6 11.4 11.6 9.8 11.6 6.8 C11.6 4.4 10.6 2 8 2 Z" fill="#bcbcbc"/><path d="M5.8 14.1 a2.2 1.9 0 0 0 4.4 0 Z" fill="#bcbcbc"/><circle cx="13.5" cy="3.5" r="3.7" fill="#2a8cf0"/></svg>
<svg style="position:absolute;left:1019px;top:1px;" width="22" height="22" viewBox="0 0 22 22"><circle cx="8.7" cy="8.7" r="5.8" fill="none" stroke="#c2c2c2" stroke-width="2"/><path d="M13 13 L17.2 17.2" stroke="#c2c2c2" stroke-width="2.3" stroke-linecap="round"/></svg>
<div style="position:absolute;left:1050px;top:1px;width:2px;height:20px;background:#444;"></div>
<svg style="position:absolute;left:1072px;top:6px;" width="18" height="12" viewBox="0 0 18 12"><rect x="0" y="0" width="7.9" height="11" fill="#c4c4c4"/><rect x="9" y="0" width="8.2" height="4.9" fill="#c4c4c4"/><rect x="9" y="6.2" width="8.2" height="4.8" fill="#c4c4c4"/></svg>
<svg style="position:absolute;left:1107px;top:5px;" width="17" height="13" viewBox="0 0 17 13"><rect x="0.7" y="0.7" width="14.7" height="11.5" fill="none" stroke="#c4c4c4" stroke-width="1.3"/><rect x="0" y="0" width="16" height="2.3" fill="#c4c4c4"/><rect x="2.3" y="3.5" width="2.4" height="2" fill="none" stroke="#c4c4c4" stroke-width="0.7"/><rect x="2.3" y="5.9" width="2.4" height="2" fill="none" stroke="#c4c4c4" stroke-width="0.7"/><rect x="2.3" y="8.3" width="2.4" height="2" fill="none" stroke="#c4c4c4" stroke-width="0.7"/></svg>
<div style="position:absolute;left:1136px;top:-6px;width:84px;height:19.5px;border:1px solid #4a4a4a;border-radius:4px;"></div>
<div style="position:absolute;left:1164px;top:0px;width:1px;height:13px;background:#444;"></div>
<div style="position:absolute;left:1191px;top:0px;width:1px;height:13px;background:#444;"></div>
<div style="position:absolute;left:1144.8px;top:6px;width:10.4px;height:2.9px;background:#8e8e8e;"></div>
<div style="position:absolute;left:1173px;top:1px;width:10px;height:8px;border:2.2px solid #8e8e8e;"></div>
<svg style="position:absolute;left:1200px;top:-3px;" width="12" height="12" viewBox="0 0 12 12"><path d="M1 0.6 L11 11 M11 0.6 L1 11" stroke="#9c9c9c" stroke-width="2.4"/></svg>
<div style="position:absolute;left:0px;top:36px;width:2px;height:20px;background:repeating-linear-gradient(180deg,#222 0,#222 1px,transparent 1px,transparent 2px);"></div>
<div style="position:absolute;left:7.70px;top:41px;font-size:9.6px;line-height:12px;color:#b4b4b4;white-space:nowrap;transform-origin:0 0;transform:scaleX(1.0168);">No Selection</div>
<div style="position:absolute;left:98px;top:29px;width:1.4px;height:32px;background:#282828;"></div>
<div style="position:absolute;left:105px;top:35px;width:39px;height:21px;background:#262626;border:1px solid #3c3c3c;border-radius:3px;"></div>
<div style="position:absolute;left:106px;top:36px;width:19px;height:19px;background:#f28eb9;border:1px solid #e8e8e8;"></div>
<svg style="position:absolute;left:128.5px;top:39.5px;" width="12" height="12" viewBox="0 0 12 12"><path d="M2.4 4.5 L6 8.1 L9.6 4.5" fill="none" stroke="#d0d0d0" stroke-width="1.5"/></svg>
<div style="position:absolute;left:149px;top:35px;width:39px;height:21px;background:#262626;border:1px solid #3c3c3c;border-radius:3px;"></div>
<svg style="position:absolute;left:150px;top:36px;" width="19" height="19" viewBox="0 0 19 19"><rect width="19" height="19" fill="#fff"/><rect x="6.3" y="6.8" width="5" height="5" fill="none" stroke="#000" stroke-width="1"/><path d="M1.2 17.8 L17.6 1.6" stroke="#ee1111" stroke-width="2.2"/></svg>
<svg style="position:absolute;left:172.5px;top:39.5px;" width="12" height="12" viewBox="0 0 12 12"><path d="M2.4 4.5 L6 8.1 L9.6 4.5" fill="none" stroke="#d0d0d0" stroke-width="1.5"/></svg>
<div style="position:absolute;left:200.00px;top:41px;font-size:10.3px;line-height:12px;color:#d6d6d6;font-weight:bold;white-space:nowrap;transform-origin:0 0;transform:scaleX(0.8721);">Stroke:</div>
<div style="position:absolute;left:200px;top:52px;width:31px;height:1px;background:repeating-linear-gradient(90deg,#9a9a9a 0,#9a9a9a 1px,transparent 1px,transparent 2px);"></div>
<div style="position:absolute;left:237px;top:35px;width:81.5px;height:21px;background:#262626;border:1px solid #3c3c3c;border-radius:3px;"></div>
<div style="position:absolute;left:255px;top:36px;width:1px;height:19px;background:#3c3c3c;"></div>
<div style="position:absolute;left:300.5px;top:36px;width:1px;height:19px;background:#3c3c3c;"></div>
<div style="position:absolute;left:256px;top:36px;width:44.5px;height:19px;background:#242424;"></div>
<svg style="position:absolute;left:240px;top:37px;" width="12" height="17" viewBox="0 0 12 17"><path d="M2.6 6.2 L6 3 L9.4 6.2" fill="none" stroke="#d0d0d0" stroke-width="1.4"/><path d="M2.6 11 L6 14.2 L9.4 11" fill="none" stroke="#d0d0d0" stroke-width="1.4"/></svg>
<svg style="position:absolute;left:303px;top:39.5px;" width="12" height="12" viewBox="0 0 12 12"><path d="M2.4 4.5 L6 8.1 L9.6 4.5" fill="none" stroke="#d0d0d0" stroke-width="1.5"/></svg>
<div style="position:absolute;left:324px;top:35px;width:90px;height:21px;background:#6a6a6a;"></div>
<div style="position:absolute;left:414px;top:35px;width:19px;height:21px;background:#383838;border-radius:0 3px 3px 0;"></div>
<svg style="position:absolute;left:417.5px;top:39.5px;" width="12" height="12" viewBox="0 0 12 12"><path d="M2.4 4.5 L6 8.1 L9.6 4.5" fill="none" stroke="#555" stroke-width="1.5"/></svg>
<div style="position:absolute;left:438px;top:35px;width:106px;height:21px;background:#262626;border:1px solid #3c3c3c;border-radius:3px;"></div>
<div style="position:absolute;left:439px;top:36px;width:86px;height:19px;background:#e4e4e4;"></div>
<div style="position:absolute;left:445.8px;top:42.7px;width:5.4px;height:5.4px;border-radius:50%;background:#000;"></div>
<div style="position:absolute;left:463.00px;top:41px;font-size:10.3px;line-height:12px;color:#000;white-space:nowrap;transform-origin:0 0;transform:scaleX(0.9689);">5 pt. Round</div>
<svg style="position:absolute;left:528px;top:39.5px;" width="12" height="12" viewBox="0 0 12 12"><path d="M2.4 4.5 L6 8.1 L9.6 4.5" fill="none" stroke="#d0d0d0" stroke-width="1.5"/></svg>
<div style="position:absolute;left:550.60px;top:41px;font-size:10.3px;line-height:12px;color:#d6d6d6;font-weight:bold;white-space:nowrap;transform-origin:0 0;transform:scaleX(0.8956);">Opacity:</div>
<div style="position:absolute;left:550.6px;top:52px;width:37px;height:1px;background:repeating-linear-gradient(90deg,#9a9a9a 0,#9a9a9a 1px,transparent 1px,transparent 2px);"></div>
<div style="position:absolute;left:593px;top:35px;width:70px;height:21px;background:#262626;border:1px solid #3c3c3c;border-radius:3px;"></div>
<div style="position:absolute;left:644.5px;top:36px;width:1px;height:19px;background:#3c3c3c;"></div>
<div style="position:absolute;left:597.30px;top:41px;font-size:10.3px;line-height:12px;color:#dcdcdc;white-space:nowrap;transform-origin:0 0;transform:scaleX(0.9288);">100%</div>
<svg style="position:absolute;left:647.5px;top:39.5px;" width="12" height="12" viewBox="0 0 12 12"><path d="M4.6 2.4 L8.2 6 L4.6 9.6" fill="none" stroke="#d0d0d0" stroke-width="1.4"/></svg>
<div style="position:absolute;left:667.90px;top:41px;font-size:10.3px;line-height:12px;color:#8e8e8e;font-weight:bold;white-space:nowrap;transform-origin:0 0;transform:scaleX(0.8747);">Style:</div>
<div style="position:absolute;left:698px;top:35px;width:39px;height:21px;background:#262626;border:1px solid #3c3c3c;border-radius:3px;"></div>
<div style="position:absolute;left:699px;top:36px;width:19px;height:19px;background:#e2e2e2;"></div>
<svg style="position:absolute;left:721.5px;top:39.5px;" width="12" height="12" viewBox="0 0 12 12"><path d="M2.4 4.5 L6 8.1 L9.6 4.5" fill="none" stroke="#d0d0d0" stroke-width="1.5"/></svg>
<div style="position:absolute;left:742.4px;top:29px;width:1.4px;height:32px;background:#282828;"></div>
<div style="position:absolute;left:749px;top:36px;width:93px;height:19px;border:1px solid #4e4e4e;border-radius:3px;background:#2e2e2e;"></div>
<div style="position:absolute;left:758.80px;top:41px;font-size:10.3px;line-height:12px;color:#e0e0e0;white-space:nowrap;transform-origin:0 0;transform:scaleX(0.9603);">Document Setup</div>
<div style="position:absolute;left:847px;top:36px;width:71px;height:19px;border:1px solid #4e4e4e;border-radius:3px;background:#2e2e2e;"></div>
<div style="position:absolute;left:856.60px;top:41px;font-size:10.3px;line-height:12px;color:#e0e0e0;white-space:nowrap;transform-origin:0 0;transform:scaleX(0.9294);">Preferences</div>
<svg style="position:absolute;left:920px;top:30px;" width="90" height="30" viewBox="0 0 90 30"><rect x="8.3" y="11.2" width="6.2" height="7.4" fill="#5a5a5a" stroke="#c4c4c4" stroke-width="1"/><rect x="16.9" y="7.2" width="6.8" height="7.4" fill="#5a5a5a" stroke="#c4c4c4" stroke-width="1"/><path d="M7.6 10.5 L9 11.9 M7.6 19.3 L9 17.9 M16.2 6.5 L17.6 7.9 M24.4 6.5 L23 7.9 M24.4 15.3 L23 13.9" stroke="#c4c4c4" stroke-width="0.9"/><path d="M15.1 11 L15.1 23.3 L18.3 20.2 L22.9 19.3 Z" fill="#c8c8c8"/></svg>
<svg style="position:absolute;left:948.5px;top:38.2px;" width="12" height="12" viewBox="0 0 12 12"><path d="M2.3 4.65 L6 7.949999999999999 L9.7 4.65" fill="none" stroke="#dcdcdc" stroke-width="1.4"/></svg>
<div style="position:absolute;left:966px;top:29px;width:1.4px;height:32px;background:#282828;"></div>
<svg style="position:absolute;left:920px;top:30px;" width="90" height="30" viewBox="0 0 90 30"><path d="M64.1 14.4 V20.4 Q64.1 22.1 65.8 22.1 H74.9 Q76.6 22.1 76.6 20.4 V14.8" fill="none" stroke="#c8c8c8" stroke-width="1.8"/><path d="M76.21 6.15 L76.40 9.55 L79.25 11.41 L75.85 11.60 L73.99 14.45 L73.80 11.05 L70.95 9.19 L74.35 9.00 Z" fill="#c8c8c8"/><path d="M70.30 13.69 L70.42 15.83 L72.21 17.00 L70.07 17.12 L68.90 18.91 L68.78 16.78 L66.99 15.60 L69.12 15.48 Z" fill="#c8c8c8"/><circle cx="64.4" cy="9.6" r="3.7" fill="#2a8cf0"/></svg>
<svg style="position:absolute;left:1090px;top:30px;" width="132" height="30" viewBox="0 0 132 30"><rect x="10.8" y="9.2" width="4.3" height="3.9" fill="#555"/><rect x="18" y="9.2" width="4.3" height="3.9" fill="#555"/><rect x="10.8" y="16" width="4.3" height="4" fill="#555"/><rect x="18" y="16" width="4.3" height="4" fill="#555"/><path d="M16.5 7 V22 M9 14.5 H24" stroke="#464646" stroke-width="0.8"/><rect x="36" y="7.9" width="4.2" height="3.8" fill="#c4c4c4"/><rect x="36" y="13" width="4.2" height="3.8" fill="#c4c4c4"/><rect x="36" y="18.1" width="4.2" height="3.8" fill="#c4c4c4"/><path d="M42.2 12 H46.4 A2.7 2.7 0 0 1 46.4 17.4 H42.2" fill="none" stroke="#c4c4c4" stroke-width="2.3"/><path d="M44 10 V19.5" stroke="#323232" stroke-width="0.8"/><path d="M62.2 21.1 V14.2 A4.75 4.75 0 0 1 71.7 14.2 V21.1" fill="none" stroke="#c4c4c4" stroke-width="3"/><path d="M60 17.8 H74" stroke="#323232" stroke-width="1"/><path d="M74.8 14.6 L78.3 17.6 L81.8 14.6" fill="none" stroke="#c4c4c4" stroke-width="1.3"/><rect x="103.9" y="11.1" width="2" height="2" fill="#c4c4c4"/><rect x="107.2" y="11.45" width="7.9" height="1.3" fill="#c4c4c4"/><rect x="103.9" y="14.2" width="2" height="2" fill="#c4c4c4"/><rect x="107.2" y="14.55" width="7.9" height="1.3" fill="#c4c4c4"/><rect x="103.9" y="17.4" width="2" height="2" fill="#c4c4c4"/><rect x="107.2" y="17.75" width="7.9" height="1.3" fill="#c4c4c4"/></svg>
<div style="position:absolute;left:69.00px;top:70px;font-size:12px;line-height:14px;color:#9c9c9c;font-weight:bold;white-space:nowrap;transform-origin:0 0;transform:scaleX(0.8991);">Bloat.ai</div>
<svg style="position:absolute;left:121px;top:73px;" width="8" height="8" viewBox="0 0 8 8"><path d="M1.2 1.2 L6.8 6.8 M6.8 1.2 L1.2 6.8" stroke="#9c9c9c" stroke-width="1.7"/></svg>
<div style="position:absolute;left:135px;top:62px;width:1px;height:29px;background:#222;"></div>
<div style="position:absolute;left:145.00px;top:70px;font-size:12px;line-height:14px;color:#9c9c9c;font-weight:bold;white-space:nowrap;transform-origin:0 0;transform:scaleX(0.8916);">Circle Mesh.ai</div>
<svg style="position:absolute;left:230px;top:73px;" width="8" height="8" viewBox="0 0 8 8"><path d="M1.2 1.2 L6.8 6.8 M6.8 1.2 L1.2 6.8" stroke="#9c9c9c" stroke-width="1.7"/></svg>
<div style="position:absolute;left:244px;top:62px;width:1px;height:29px;background:#222;"></div>
<div style="position:absolute;left:254.00px;top:70px;font-size:12px;line-height:14px;color:#9c9c9c;font-weight:bold;white-space:nowrap;transform-origin:0 0;transform:scaleX(0.9231);">Heart Mesh.ai</div>
<svg style="position:absolute;left:339px;top:73px;" width="8" height="8" viewBox="0 0 8 8"><path d="M1.2 1.2 L6.8 6.8 M6.8 1.2 L1.2 6.8" stroke="#9c9c9c" stroke-width="1.7"/></svg>
<div style="position:absolute;left:353px;top:62px;width:1px;height:29px;background:#222;"></div>
<div style="position:absolute;left:363.30px;top:70px;font-size:12px;line-height:14px;color:#9c9c9c;font-weight:bold;white-space:nowrap;transform-origin:0 0;transform:scaleX(0.9040);">Envelope Top Object.ai</div>
<svg style="position:absolute;left:495px;top:73px;" width="8" height="8" viewBox="0 0 8 8"><path d="M1.2 1.2 L6.8 6.8 M6.8 1.2 L1.2 6.8" stroke="#9c9c9c" stroke-width="1.7"/></svg>
<div style="position:absolute;left:509px;top:62px;width:1px;height:29px;background:#222;"></div>
<div style="position:absolute;left:519.70px;top:70px;font-size:12px;line-height:14px;color:#9c9c9c;font-weight:bold;white-space:nowrap;transform-origin:0 0;transform:scaleX(0.9042);">Envelope Mesh.ai</div>
<svg style="position:absolute;left:623.8px;top:73px;" width="8" height="8" viewBox="0 0 8 8"><path d="M1.2 1.2 L6.8 6.8 M6.8 1.2 L1.2 6.8" stroke="#9c9c9c" stroke-width="1.7"/></svg>
<div style="position:absolute;left:638px;top:62px;width:1px;height:29px;background:#222;"></div>
<div style="position:absolute;left:648.00px;top:70px;font-size:12px;line-height:14px;color:#9c9c9c;font-weight:bold;white-space:nowrap;transform-origin:0 0;transform:scaleX(0.9134);">Envelope Warp.ai</div>
<svg style="position:absolute;left:751.5px;top:73px;" width="8" height="8" viewBox="0 0 8 8"><path d="M1.2 1.2 L6.8 6.8 M6.8 1.2 L1.2 6.8" stroke="#9c9c9c" stroke-width="1.7"/></svg>
<div style="position:absolute;left:766px;top:62px;width:1px;height:29px;background:#222;"></div>
<div style="position:absolute;left:776.00px;top:70px;font-size:12px;line-height:14px;color:#9c9c9c;font-weight:bold;white-space:nowrap;transform-origin:0 0;transform:scaleX(0.9128);">Blend Tutorial.ai</div>
<svg style="position:absolute;left:874px;top:73px;" width="8" height="8" viewBox="0 0 8 8"><path d="M1.2 1.2 L6.8 6.8 M6.8 1.2 L1.2 6.8" stroke="#9c9c9c" stroke-width="1.7"/></svg>
<div style="position:absolute;left:888px;top:62px;width:1px;height:29px;background:#222;"></div>
<div style="position:absolute;left:889px;top:62px;width:253px;height:29px;background:#303030;"></div>
<div style="position:absolute;left:898.00px;top:70px;font-size:12px;line-height:14px;color:#f0f0f0;font-weight:bold;white-space:nowrap;transform-origin:0 0;transform:scaleX(0.9259);">Tidal Wave* @ 172.44 % (CMYK/Preview)</div>
<svg style="position:absolute;left:1128px;top:73px;" width="8" height="8" viewBox="0 0 8 8"><path d="M1.2 1.2 L6.8 6.8 M6.8 1.2 L1.2 6.8" stroke="#e8e8e8" stroke-width="1.7"/></svg>
<div style="position:absolute;left:1142px;top:62px;width:1px;height:29px;background:#222;"></div>
<svg style="position:absolute;left:1164px;top:71px;" width="14" height="11" viewBox="0 0 14 11"><path d="M2.2 2 L6.2 5.5 L2.2 9 M8.4 2 L12.4 5.5 L8.4 9" fill="none" stroke="#d4d4d4" stroke-width="1.4"/></svg>
<svg style="position:absolute;left:0px;top:63.7px;" width="14" height="10" viewBox="0 0 14 10"><path d="M2.8 2.5 L0.1 5 L2.8 7.5 Z M6.2 2.5 L3.5 5 L6.2 7.5 Z" fill="#c0c0c0"/></svg>
<div style="position:absolute;left:19px;top:77px;width:19px;height:5px;background:repeating-linear-gradient(90deg,#222 0,#222 1px,transparent 1px,transparent 2px);"></div>
<svg style="position:absolute;left:1206px;top:63.7px;" width="14" height="10" viewBox="0 0 14 10"><path d="M6 2.3 L3 5 L6 7.7 Z M10.2 2.3 L7.2 5 L10.2 7.7 Z" fill="#c0c0c0"/></svg>
<svg style="position:absolute;left:0;top:0" width="65" height="500" viewBox="0 0 65 500"><rect x="-1" y="94.5" width="29.5" height="22.5" rx="2" fill="#1e1e1e" stroke="#454545" stroke-width="1"/><path d="M9.2 98.6 L9.2 114.4 L13.9 110.5 L20.2 109.1 Z" fill="none" stroke="#dcdcdc" stroke-width="1.15" stroke-linejoin="miter"/><path d="M39.1 98 L39.1 115 L44.4 110.8 L51.1 109.2 Z" fill="#c4c4c4"/><path d="M57.2 112.5 L57.2 116 L53.7 116 Z" fill="#9c9c9c"/><path d="M5.9 137.6 L8.4 129.2 Q9.0 127.0 11.3 126.2 L14.0 125.3 L18.4 129.7 L17.6 132.4 Q16.9 134.8 14.6 135.5 Z" fill="#c4c4c4"/><path d="M6.6 136.9 L11.7 131.8" stroke="#323232" stroke-width="0.9"/><path d="M15.0 124.5 L17.3 122.1 L22 126.8 L19.6 129.2 Z" fill="#c4c4c4"/><path d="M27.1 136.4 L27.1 139.9 L23.6 139.9 Z" fill="#9c9c9c"/><path d="M38.1 137.6 L40.6 129.2 Q41.2 127.0 43.5 126.2 L46.2 125.3 L50.6 129.7 L49.800000000000004 132.4 Q49.1 134.8 46.800000000000004 135.5 Z" fill="#c4c4c4"/><path d="M38.800000000000004 136.9 L43.900000000000006 131.8" stroke="#323232" stroke-width="0.9"/><path d="M47.2 124.5 L49.5 122.1 L54.2 126.8 L51.800000000000004 129.2 Z" fill="#c4c4c4"/><path d="M35 123.3 Q38.8 126 36.4 130.4 Q33.2 135.6 37.8 137.5" fill="none" stroke="#c4c4c4" stroke-width="1.25"/><ellipse cx="14" cy="154" rx="8.8" ry="7" fill="#4c4c4c" stroke="#c4c4c4" stroke-width="1.1"/><path d="M27.1 160.5 L27.1 164 L23.6 164 Z" fill="#9c9c9c"/><path d="M52.3 145.4 Q52 148.6 50.4 150.4 L44.6 156.4 L42.2 154 L48.2 148 Q50 146.2 52.3 145.4 Z" fill="#c4c4c4"/><path d="M41.4 154.9 L43.7 157.2 Q44.4 160.8 40.8 161.6 L35.6 161.9 Q38.2 159.8 38.3 157.6 Q38.6 155.2 41.4 154.9 Z" fill="#c4c4c4"/><path d="M57.2 160.5 L57.2 164 L53.7 164 Z" fill="#9c9c9c"/><path d="M6.8 170.8 H21.1 V175.2 H19.3 V173.3 H15.2 V183.3 H17.2 V185.1 H10.8 V183.3 H12.8 V173.3 H8.6 V175.2 H6.8 Z" fill="#c4c4c4"/><path d="M27.1 184.5 L27.1 188 L23.6 188 Z" fill="#9c9c9c"/><path d="M40.6 172.8 A7.1 7.1 0 0 1 51 180" fill="none" stroke="#c4c4c4" stroke-width="1.7"/><path d="M36.2 171 L36.4 176.6 L42.2 175.4 Z" fill="#c4c4c4"/><path d="M50.6 182.2 A7.1 7.1 0 0 1 37 180.6" fill="none" stroke="#c4c4c4" stroke-width="1.3" stroke-dasharray="1 1.7"/><path d="M57.2 184.5 L57.2 188 L53.7 188 Z" fill="#9c9c9c"/><path d="M15.4 193.1 L22.9 200.6 L15.6 207.9 L8.1 200.4 Z" fill="#c4c4c4"/><path d="M8.9 201.5 L6.1 204.3 Q5.6 204.9 6.1 205.5 L10.6 210 Q11.2 210.5 11.8 210 L14.6 207.1" fill="none" stroke="#c4c4c4" stroke-width="1.1"/><path d="M27.1 208.5 L27.1 212 L23.6 212 Z" fill="#9c9c9c"/><circle cx="39.4" cy="200.6" r="4.3" fill="none" stroke="#c4c4c4" stroke-width="1"/><path d="M41.6 196.4 A5.6 5.6 0 1 1 45.8 206.4 L41 206.2" fill="none" stroke="#c4c4c4" stroke-width="1"/><path d="M37 200.6 H46.4" stroke="#e8e8e8" stroke-width="1.1" stroke-dasharray="1.1 1.1"/><path d="M47 199.6 L47 210.4 L50.1 207.8 L55 206.3 Z" fill="#c4c4c4"/><rect x="6.6" y="219.6" width="15" height="13" fill="none" stroke="#c4c4c4" stroke-width="1.2"/><path d="M6.6 224.4 Q14 221.6 21.6 226.4 M6.6 229.6 Q13 225.6 21.6 230.8 M11.6 219.6 Q14.8 226 11 232.6 M17.4 219.6 Q19.6 226 16.6 232.6 M7 232 Q12 224 17 220" fill="none" stroke="#c4c4c4" stroke-width="0.8"/><path d="M27.1 232.5 L27.1 236 L23.6 236 Z" fill="#9c9c9c"/><path d="M40 228.7 L48.6 222.5" stroke="#c4c4c4" stroke-width="1.9"/><path d="M35.2 227.4 L40 234 M46.8 218 L51.8 224.6" stroke="#c4c4c4" stroke-width="1.2"/><path d="M37.8 230.3 L39.3 225.9 L42.6 230.5 Z M50.8 220.9 L49.3 225.3 L46 220.7 Z" fill="#c4c4c4"/><path d="M39.6 222.8 L42.2 220.9 M40.5 224.1 L43.1 222.2" stroke="#c4c4c4" stroke-width="0.9"/><path d="M21.3 242.4 Q22.6 243.8 21.4 245.4 L18.6 248.2 L19.4 249 L18 250.4 L13.4 245.8 L14.8 244.4 L15.6 245.2 L18.4 242.4 Q19.9 241.2 21.3 242.4 Z" fill="#c4c4c4"/><path d="M14.6 248.2 L6.8 256 Q5.8 257.4 6.6 258 Q7.4 258.6 8.6 257.6 L16.4 249.8" fill="none" stroke="#c4c4c4" stroke-width="1.2"/><path d="M37.4 244.6 Q38 242.6 40 243.4 Q42.4 244.6 42.6 247.4 Q45 244.8 48.8 246 Q53.6 247 53 252.6 L51.6 252.8 Q51.8 249 49.4 248.8 Q47.8 254.4 42.6 254.8 Q38.6 255 36.6 253.4 Q39.8 252.6 40.2 249.4 Q40.6 245.4 37.4 244.6 Z" fill="#c4c4c4"/><path d="M36.2 255.4 L46.4 245.4" stroke="#c4c4c4" stroke-width="0.9"/><rect x="35" y="254.4" width="2.6" height="2.6" fill="#323232" stroke="#c4c4c4" stroke-width="0.8"/><circle cx="41.1" cy="251.2" r="1.5" fill="#323232" stroke="#c4c4c4" stroke-width="0.8"/><circle cx="46.6" cy="245.2" r="1.1" fill="#323232" stroke="#c4c4c4" stroke-width="0.8"/><rect x="5" y="267.2" width="8" height="8" fill="#c4c4c4"/><path d="M12.2 270.4 H16 L18 272.4 V276 L16 278 H12.2 L10.2 276 V272.4 Z" fill="#7a7a7a" stroke="#323232" stroke-width="0.8"/><circle cx="19" cy="277" r="3.5" fill="#323232" stroke="#c4c4c4" stroke-width="1.3"/><path d="M39.5 265 V269.2 M34 270.6 H38" stroke="#c4c4c4" stroke-width="1"/><path d="M39.6 270.4 H48 L50.8 273.2 V280.8 H39.6 Z" fill="#4c4c4c" stroke="#c4c4c4" stroke-width="1.1"/><path d="M48 270.4 L50.8 273.2 H48 Z" fill="#c4c4c4"/><path d="M6.2 289.2 Q8.6 298 6.2 306.8" fill="none" stroke="#c4c4c4" stroke-width="1.2"/><path d="M9.4 292 L17.6 291.2 L17.6 296.2 L9.8 297 Z" fill="#c4c4c4"/><path d="M9.8 299.2 L21.8 300 L21.6 305.6 L9.4 304.8 Z" fill="#c4c4c4"/><circle cx="21.5" cy="292.6" r="3.6" fill="#2a8cf0"/><path d="M40 300.6 L36.2 297.8 Q36.6 296.4 38.4 297 L40.4 298.4 L39.4 292.6 Q39.6 291.4 40.8 291.8 L42.2 296.6 L42.4 290.8 Q43.2 289.8 44.2 290.8 L44.8 296.4 L46.2 291.4 Q47.2 290.6 47.8 291.8 L47.4 297.4 L49.8 294.2 Q51 293.8 51.2 295 L48.6 301.4 Q48 305 45.4 305.8 H43 Q41 305.2 40 300.6 Z" fill="#c4c4c4"/><path d="M57.2 304.5 L57.2 308 L53.7 308 Z" fill="#9c9c9c"/><rect x="0" y="312" width="58" height="1" fill="#2a2a2a"/><rect x="17.3" y="335.2" width="35.4" height="35.3" fill="#141414"/><rect x="18" y="335.9" width="34" height="34" fill="#fff"/><rect x="26.6" y="344.8" width="16.9" height="16.5" fill="#141414"/><rect x="27.4" y="345.6" width="15.3" height="14.9" fill="#323232"/><path d="M18.5 369.4 L51.5 336.5" stroke="#ff0000" stroke-width="2.3"/><rect x="-1" y="317.3" width="35.7" height="35.3" fill="#141414"/><rect x="-1" y="317.9" width="35.1" height="34.1" fill="#fff"/><rect x="-1" y="319.1" width="33.8" height="31.6" fill="#f28eb9"/><rect x="0" y="319.1" width="1.2" height="31.6" fill="#fff"/><path d="M46.8 321 H49.4 Q52 321 52 323.8 V326.6" fill="none" stroke="#b4b4b4" stroke-width="1.7"/><path d="M47.2 318 L43.6 321 L47.2 324 Z M48.8 326.2 L52 329.6 L55.2 326.2 Z" fill="#b4b4b4"/><rect x="2.6" y="361.7" width="8.3" height="7.8" fill="#a0a0a0"/><rect x="3.2" y="362.3" width="7.1" height="6.6" fill="#000"/><rect x="5.2" y="364.3" width="3.1" height="2.6" fill="#fff"/><rect x="-0.4" y="358.2" width="8" height="8" fill="#a0a0a0"/><rect x="0.3" y="358.9" width="6.6" height="6.6" fill="#000"/><rect x="0.9" y="359.9" width="5.2" height="5" fill="#fff"/><rect x="-1" y="377.6" width="58.8" height="20" rx="2" fill="#303030" stroke="#3e3e3e" stroke-width="1"/><rect x="0" y="378.1" width="18" height="19" fill="#232323"/><path d="M18.5 378.1 V397.1 M38.3 378.1 V397.1" stroke="#3e3e3e" stroke-width="1"/><rect x="2" y="381.2" width="12.9" height="12.8" fill="#000"/><rect x="3.1" y="382.3" width="10.7" height="10.6" fill="#f28eb9"/><defs><linearGradient id="gm" x1="0" x2="1"><stop offset="0" stop-color="#fff"/><stop offset="1" stop-color="#2a2a2a"/></linearGradient></defs><rect x="22" y="381.2" width="12.9" height="12.8" fill="#000"/><rect x="23.1" y="382.3" width="10.7" height="10.6" fill="url(#gm)"/><rect x="42" y="381.2" width="12.9" height="12.8" fill="#000"/><rect x="43.1" y="382.3" width="10.7" height="10.6" fill="#fff"/><path d="M43.1 392.9 L53.8 382.3 L53.8 385.4 L46.2 392.9 Z" fill="#ff0000"/><rect x="-1" y="402.2" width="58.8" height="18.6" rx="2" fill="#303030" stroke="#3e3e3e" stroke-width="1"/><rect x="0" y="402.7" width="18" height="17.6" fill="#232323"/><path d="M18.5 402.7 V420.3 M38.3 402.7 V420.3" stroke="#3e3e3e" stroke-width="1"/><circle cx="7.7" cy="410.7" r="3.6" fill="#5a5a5a" stroke="#c4c4c4" stroke-width="1"/><rect x="8.2" y="411.4" width="5.6" height="5.5" fill="#c4c4c4"/><rect x="28.4" y="411.4" width="5.6" height="5.5" fill="#c4c4c4"/><circle cx="27.9" cy="410.7" r="3.6" fill="#5a5a5a" stroke="#c4c4c4" stroke-width="1"/><circle cx="47.9" cy="411.2" r="3.6" fill="#3a3a3a" stroke="#585858" stroke-width="1"/><path d="M47.9 411.2 H51.5 A3.6 3.6 0 0 1 47.9 414.8 Z" fill="#585858"/><rect x="18.6" y="433.9" width="12.8" height="10.4" fill="#505050" stroke="#c4c4c4" stroke-width="1.1"/><path d="M18.6 434.6 H31.4" stroke="#c4c4c4" stroke-width="2"/><rect x="26.7" y="429.8" width="12.8" height="10.4" fill="#505050" stroke="#c4c4c4" stroke-width="1.1"/><path d="M26.7 430.5 H39.5" stroke="#c4c4c4" stroke-width="2"/><circle cx="23.8" cy="469.1" r="1.7" fill="#c4c4c4"/><circle cx="29" cy="469.1" r="1.7" fill="#c4c4c4"/><circle cx="34.2" cy="469.1" r="1.7" fill="#c4c4c4"/></svg>
<div style="position:absolute;left:1194px;top:78px;width:19px;height:4px;background:repeating-linear-gradient(90deg,#222 0,#222 1px,transparent 1px,transparent 2px);"></div>
<div style="position:absolute;left:1185px;top:171px;width:37px;height:1.5px;background:#262626;"></div>
<div style="position:absolute;left:1194px;top:175.5px;width:19px;height:4px;background:repeating-linear-gradient(90deg,#222 0,#222 1px,transparent 1px,transparent 2px);"></div>
<div style="position:absolute;left:1185px;top:324px;width:37px;height:1.5px;background:#262626;"></div>
<div style="position:absolute;left:1194px;top:328.5px;width:19px;height:4px;background:repeating-linear-gradient(90deg,#222 0,#222 1px,transparent 1px,transparent 2px);"></div>
<div style="position:absolute;left:1185px;top:421px;width:37px;height:1.5px;background:#262626;"></div>
<div style="position:absolute;left:1194px;top:425.2px;width:19px;height:4px;background:repeating-linear-gradient(90deg,#222 0,#222 1px,transparent 1px,transparent 2px);"></div>
<div style="position:absolute;left:1185px;top:489.6px;width:37px;height:1.5px;background:#262626;"></div>
<div style="position:absolute;left:1194px;top:494.4px;width:19px;height:4px;background:repeating-linear-gradient(90deg,#222 0,#222 1px,transparent 1px,transparent 2px);"></div>
<div style="position:absolute;left:1185px;top:586.6px;width:37px;height:1.5px;background:#262626;"></div>
<div style="position:absolute;left:1194px;top:591.4px;width:19px;height:4px;background:repeating-linear-gradient(90deg,#222 0,#222 1px,transparent 1px,transparent 2px);"></div>
<div style="position:absolute;left:1185px;top:628px;width:37px;height:1.5px;background:#262626;"></div>
<svg style="position:absolute;left:0;top:0" width="1222" height="700" viewBox="0 0 1222 700"><rect x="1196.4" y="93.4" width="15.4" height="10.4" fill="#c4c4c4" stroke="#c4c4c4" stroke-width="0.8"/><rect x="1197.3" y="94.4" width="3.8" height="3.7" fill="#6e6e6e"/><rect x="1202.1" y="94.4" width="3.8" height="3.7" fill="#bdbdbd"/><rect x="1207.0" y="94.4" width="3.8" height="3.7" fill="#6e6e6e"/><rect x="1197.3" y="99.2" width="3.8" height="3.7" fill="#6e6e6e"/><rect x="1202.1" y="99.2" width="3.8" height="3.7" fill="#7c7c7c"/><rect x="1207.0" y="99.2" width="3.8" height="3.7" fill="#8a8a8a"/><path d="M1204.2 119.2 C1199 119.6 1194.8 122.6 1194.8 126.4 C1194.8 130.4 1199 133 1204.4 133 C1209.8 133 1213.8 130 1213.8 125.8 C1213.8 122 1210.6 119 1206.2 119.2 C1204.4 119.4 1203.6 120.4 1204.2 121.6 C1205 123.2 1203.8 124.6 1201.8 124.4 C1200 124.2 1199.6 122.6 1200.8 121.2 C1201.8 120 1203 119.4 1204.2 119.2 Z" fill="#c4c4c4"/><circle cx="1199.4" cy="128.4" r="1.5" fill="#323232"/><circle cx="1204" cy="129.8" r="1.5" fill="#323232"/><circle cx="1208.4" cy="129.2" r="1.4" fill="#323232"/><circle cx="1211" cy="126.8" r="1.1" fill="#323232"/><circle cx="1210" cy="123.6" r="1.1" fill="#323232"/><defs><linearGradient id="cg" x1="0" y1="0" x2="1" y2="1"><stop offset="0" stop-color="#3a3a3a"/><stop offset="0.5" stop-color="#8a8a8a"/><stop offset="1" stop-color="#f0f0f0"/></linearGradient></defs><path d="M1197.2 146.8 A15.4 15.2 0 0 1 1212.6 162 L1197.2 162 Z" fill="url(#cg)" stroke="#c4c4c4" stroke-width="0.9"/><path d="M1197.2 146.8 V162 H1212.6" fill="none" stroke="#e0e0e0" stroke-width="1.1"/><rect x="1198" y="189.5" width="13" height="12.4" fill="none" stroke="#c4c4c4" stroke-width="1"/><rect x="1196.8" y="188.3" width="2.4" height="2.4" fill="#c4c4c4"/><rect x="1196.8" y="194.5" width="2.4" height="2.4" fill="#c4c4c4"/><rect x="1196.8" y="200.7" width="2.4" height="2.4" fill="#c4c4c4"/><rect x="1203.3" y="188.3" width="2.4" height="2.4" fill="#c4c4c4"/><rect x="1203.3" y="200.7" width="2.4" height="2.4" fill="#c4c4c4"/><rect x="1209.8" y="188.3" width="2.4" height="2.4" fill="#c4c4c4"/><rect x="1209.8" y="194.5" width="2.4" height="2.4" fill="#c4c4c4"/><rect x="1209.8" y="200.7" width="2.4" height="2.4" fill="#c4c4c4"/><rect x="1204" y="195.2" width="1" height="1" fill="#c4c4c4"/><rect x="1197" y="214.5" width="1.1" height="18.2" fill="#c4c4c4"/><rect x="1199" y="216.9" width="7.8" height="5.4" fill="#c4c4c4"/><rect x="1199" y="224.9" width="12.9" height="5.2" fill="#c4c4c4"/><rect x="1197" y="244.3" width="8.6" height="8.7" fill="#c4c4c4"/><rect x="1202.2" y="249.4" width="9.7" height="9.6" fill="#c4c4c4"/><rect x="1201.8" y="249" width="4.2" height="4.4" fill="#c4c4c4" stroke="#323232" stroke-width="0.9"/><rect x="1200.1" y="282.8" width="9" height="6.6" fill="#c4c4c4"/><path d="M1203.4 282 L1202.6 274 M1205.6 282 L1207.8 275.4 M1201.8 282 L1199 276.6" stroke="#c4c4c4" stroke-width="1.1"/><path d="M1202.6 269.4 Q1204.2 271.6 1203.6 274.4 L1201.8 274.4 Q1201.2 271.6 1202.6 269.4 Z" fill="#c4c4c4"/><path d="M1207 276 Q1208 272.6 1211.4 273.2 Q1212.8 274.2 1212 276.2 Q1209.6 274.8 1208.6 277 Z" fill="#c4c4c4"/><path d="M1198 271.6 Q1196.4 274 1197.4 276.6 L1199.6 277.4 Q1199.8 274 1198 271.6 Z" fill="#c4c4c4"/><circle cx="1204.6" cy="302.4" r="3.8" fill="#c4c4c4"/><circle cx="1200.4" cy="307.6" r="3.8" fill="#c4c4c4"/><circle cx="1208.9" cy="307.6" r="3.8" fill="#c4c4c4"/><path d="M1204.6 305 Q1204.8 312 1201.6 314.4 H1207.8 Q1204.6 312 1204.8 305 Z" fill="#c4c4c4"/><rect x="1199.2" y="314.2" width="11" height="1" fill="#c4c4c4"/><rect x="1196" y="342" width="17" height="1" fill="#c4c4c4"/><rect x="1196" y="346" width="17" height="2.3" fill="#c4c4c4"/><rect x="1196" y="351" width="17" height="3.2" fill="#c4c4c4"/><defs><linearGradient id="gg" x1="0" x2="1"><stop offset="0" stop-color="#3a3a3a"/><stop offset="1" stop-color="#e8e8e8"/></linearGradient></defs><rect x="1196.4" y="370.4" width="16.4" height="11.4" fill="url(#gg)" stroke="#c4c4c4" stroke-width="1"/><circle cx="1201.4" cy="402.5" r="6.2" fill="#c4c4c4"/><circle cx="1206.2" cy="407.2" r="6" fill="#6a6a6a" stroke="#c4c4c4" stroke-width="1"/><circle cx="1204.5" cy="445.6" r="5.9" fill="#c4c4c4"/><circle cx="1204.5" cy="445.6" r="8" fill="none" stroke="#c4c4c4" stroke-width="1" stroke-dasharray="2 1.6"/><rect x="1199.6" y="467" width="12.4" height="12.2" fill="none" stroke="#c4c4c4" stroke-width="1.2"/><rect x="1196.6" y="473.8" width="4.2" height="4.4" fill="#323232" stroke="#c4c4c4" stroke-width="1"/><rect x="1198.8" y="476.4" width="5.4" height="5" fill="#c4c4c4"/><path d="M1204.5 506 L1213 512.2 L1204.5 518 L1196.3 512.2 Z" fill="#c4c4c4"/><path d="M1196.3 516.8 L1198.8 515.4 L1204.5 519.6 L1210.6 515.4 L1213 516.8 L1204.5 523.2 Z" fill="#c4c4c4"/><path d="M1203 536.6 H1197.1 V549.7 H1210.7 V543.4" fill="none" stroke="#c4c4c4" stroke-width="1.6"/><path d="M1205 542.4 L1212.6 534.6" stroke="#c4c4c4" stroke-width="1.6"/><path d="M1207 533.9 H1213.4 V540.2" fill="none" stroke="#c4c4c4" stroke-width="1.6"/><rect x="1195.7" y="561.9" width="10" height="12.4" fill="none" stroke="#c4c4c4" stroke-width="1"/><rect x="1199.4" y="569" width="13" height="9.4" fill="#323232" stroke="#c4c4c4" stroke-width="1"/><path d="M1198 603.3 H1211 Q1213 603.3 1213 605.3 V612.6 Q1213 614.6 1211 614.6 H1203.6 L1199 620.2 L1199.4 614.6 H1198 Q1196 614.6 1196 612.6 V605.3 Q1196 603.3 1198 603.3 Z" fill="#c4c4c4"/></svg>
<svg style="position:absolute;left:71px;top:985px;" width="16" height="16" viewBox="0 0 16 16"><circle cx="7.9" cy="7.2" r="7.1" fill="#c2c2c2"/></svg>
<div style="position:absolute;left:76.60px;top:986px;font-size:11px;line-height:13px;color:#323232;font-weight:bold;white-space:nowrap;transform-origin:0 0;transform:scaleX(0.7704);">?</div>
<div style="position:absolute;left:97.20px;top:986px;font-size:11px;line-height:13px;color:#9e9e9e;font-weight:bold;white-space:nowrap;transform-origin:0 0;transform:scaleX(0.8628);">Click the object to select</div>
<div style="position:absolute;left:216.20px;top:986px;font-size:11px;line-height:13px;color:#9e9e9e;font-weight:bold;white-space:nowrap;transform-origin:0 0;transform:scaleX(0.4480);">|</div>
<div style="position:absolute;left:224.90px;top:986px;font-size:11px;line-height:13px;color:#9e9e9e;font-weight:bold;white-space:nowrap;transform-origin:0 0;transform:scaleX(0.8841);">Shift+Click to select multiple object</div>
<div style="position:absolute;left:397.20px;top:986px;font-size:11px;line-height:13px;color:#9e9e9e;font-weight:bold;white-space:nowrap;transform-origin:0 0;transform:scaleX(0.4480);">|</div>
<div style="position:absolute;left:405.00px;top:986px;font-size:11px;line-height:13px;color:#9e9e9e;font-weight:bold;white-space:nowrap;transform-origin:0 0;transform:scaleX(0.8953);">Alt+Drag the object to duplicate</div>
<div style="position:absolute;left:67px;top:1005px;width:288px;height:16px;background:#323232;"></div>
<div style="position:absolute;left:70.4px;top:1004.6px;width:69.6px;height:20px;background:#262626;border:1px solid #3e3e3e;border-radius:3px;"></div>
<div style="position:absolute;left:121.8px;top:1005.6px;width:1px;height:16px;background:#3e3e3e;"></div>
<div style="position:absolute;left:74.60px;top:1008px;font-size:10.5px;line-height:13px;color:#e0e0e0;white-space:nowrap;transform-origin:0 0;transform:scaleX(0.8843);">172.44%</div>
<svg style="position:absolute;left:123.4px;top:1008.6px;" width="12" height="12" viewBox="0 0 12 12"><path d="M2.7 4.6 L6 8.0 L9.3 4.6" fill="none" stroke="#d8d8d8" stroke-width="1.3"/></svg>
<div style="position:absolute;left:143.4px;top:1004.6px;width:69.4px;height:20px;background:#262626;border:1px solid #3e3e3e;border-radius:3px;"></div>
<div style="position:absolute;left:194.8px;top:1005.6px;width:1px;height:16px;background:#3e3e3e;"></div>
<div style="position:absolute;left:147.30px;top:1008px;font-size:10.5px;line-height:13px;color:#e0e0e0;white-space:nowrap;transform-origin:0 0;transform:scaleX(0.9700);">0°</div>
<svg style="position:absolute;left:196.4px;top:1008.6px;" width="12" height="12" viewBox="0 0 12 12"><path d="M2.7 4.6 L6 8.0 L9.3 4.6" fill="none" stroke="#d8d8d8" stroke-width="1.3"/></svg>
<div style="position:absolute;left:253.7px;top:1004.6px;width:58.900000000000034px;height:20px;background:#262626;border:1px solid #3e3e3e;border-radius:3px;"></div>
<div style="position:absolute;left:294.6px;top:1005.6px;width:1px;height:16px;background:#3e3e3e;"></div>
<div style="position:absolute;left:258.00px;top:1008px;font-size:10.5px;line-height:13px;color:#e0e0e0;white-space:nowrap;transform-origin:0 0;transform:scaleX(0.6809);">1</div>
<svg style="position:absolute;left:296.4px;top:1008.6px;" width="12" height="12" viewBox="0 0 12 12"><path d="M2.7 4.6 L6 8.0 L9.3 4.6" fill="none" stroke="#d8d8d8" stroke-width="1.3"/></svg>
<svg style="position:absolute;left:220px;top:1008px;" width="12" height="12" viewBox="0 0 12 12"><rect x="1.6" y="2" width="1.6" height="8" fill="#5c5c5c"/><path d="M9.4 2 L4 6 L9.4 10 Z" fill="#5c5c5c"/></svg>
<svg style="position:absolute;left:236px;top:1008px;" width="12" height="12" viewBox="0 0 12 12"><path d="M8 2 L2.6 6 L8 10 Z" fill="#5c5c5c"/></svg>
<svg style="position:absolute;left:319px;top:1008px;" width="12" height="12" viewBox="0 0 12 12"><path d="M4 2 L9.4 6 L4 10 Z" fill="#5c5c5c"/></svg>
<svg style="position:absolute;left:335px;top:1008px;" width="12" height="12" viewBox="0 0 12 12"><path d="M2.6 2 L8 6 L2.6 10 Z" fill="#5c5c5c"/><rect x="8.8" y="2" width="1.6" height="8" fill="#5c5c5c"/></svg>
<div style="position:absolute;left:354px;top:1006px;width:1px;height:15px;background:#262626;"></div>
<div style="position:absolute;left:355px;top:1005px;width:217px;height:16px;background:#323232;"></div>
<div style="position:absolute;left:434.00px;top:1009px;font-size:10.5px;line-height:13px;color:#b4b4b4;white-space:nowrap;transform-origin:0 0;transform:scaleX(0.9249);">Selection</div>
<div style="position:absolute;left:555px;top:1006px;width:1px;height:15px;background:#2a2a2a;"></div>
<svg style="position:absolute;left:558px;top:1007.5px;" width="12" height="12" viewBox="0 0 12 12"><path d="M3 1.4 L9 6 L3 10.6 Z" fill="#e0e0e0"/></svg>
<div style="position:absolute;left:571px;top:1005px;width:1px;height:16px;background:#262626;"></div>
<svg style="position:absolute;left:575px;top:1007.5px;" width="12" height="12" viewBox="0 0 12 12"><path d="M7.2 2.6 L3.8 6 L7.2 9.4" fill="none" stroke="#8a8a8a" stroke-width="1.4"/></svg>
<svg style="position:absolute;left:1151.5px;top:1007.5px;" width="12" height="12" viewBox="0 0 12 12"><path d="M4.4 2.6 L7.8 6 L4.4 9.4" fill="none" stroke="#9a9a9a" stroke-width="1.4"/></svg>
<div style="position:absolute;left:856px;top:1006.5px;width:25px;height:14.5px;background:#454545;border-radius:7px;"></div>
<div style="position:absolute;left:0px;top:1021px;width:1222px;height:1px;background:#262626;"></div>
<div style="position:absolute;left:0px;top:1022px;width:1222px;height:3px;background:#323232;"></div>
<div style="position:absolute;left:0px;top:1025px;width:1222px;height:1px;background:#222;"></div>
<div style="position:absolute;left:0px;top:1026px;width:1222px;height:1px;background:#43474b;"></div>
<div style="position:absolute;left:0px;top:1027px;width:1222px;height:6px;background:#1a1e26;background:linear-gradient(90deg,#1b1f27 0%,#1a1f28 30%,#221c25 42%,#241c26 49%,#13233a 53%,#13253a 58%,#15282c 62%,#16282a 80%,#2a1830 84%,#2c1832 100%);"></div>
<div style="position:absolute;left:624.5px;top:1030px;width:39px;height:6px;background:#263648;border-radius:3px 3px 0 0;"></div>
<div style="position:absolute;left:441px;top:914px;width:351px;height:36px;background:#313131;border:1px solid #202020;border-radius:4.5px;"></div>
<div style="position:absolute;left:447px;top:918.6px;width:4.1px;height:26.9px;background:#969696;border-radius:2px;"></div>
<div style="position:absolute;left:461px;top:918px;width:121px;height:28px;border:1px solid #4c4c4c;border-radius:3px;"></div>
<div style="position:absolute;left:586px;top:918px;width:138px;height:28px;border:1px solid #4c4c4c;border-radius:3px;"></div>
<div style="position:absolute;left:496.40px;top:926px;font-size:12px;line-height:14px;color:#d8d8d8;white-space:nowrap;transform-origin:0 0;transform:scaleX(1.0292);">Draw (Pencil)</div>
<div style="position:absolute;left:617.50px;top:926px;font-size:12px;line-height:14px;color:#d8d8d8;white-space:nowrap;transform-origin:0 0;transform:scaleX(1.0153);">Generate Vectors</div>
<svg style="position:absolute;left:471px;top:923px;" width="18" height="18" viewBox="0 0 18 18"><path d="M3.1 11.3 L10.9 3.5 L14.5 7.1 L6.7 14.9 Z" fill="#bcbcbc"/><path d="M11.7 2.7 L13.3 1.1 Q13.7 0.8 14.1 1.1 L16.9 3.9 Q17.2 4.3 16.9 4.7 L15.3 6.3 Z" fill="#bcbcbc"/><path d="M2.4 12.2 L5.8 15.6 L1.1 16.9 Z" fill="none" stroke="#bcbcbc" stroke-width="0.9" stroke-linejoin="round"/></svg>
<svg style="position:absolute;left:586px;top:916px;" width="40" height="32" viewBox="0 0 40 32"><path d="M10.9 15.2 V21.2 Q10.9 23 12.7 23 H21.2 Q23 23 23 21.2 V15.8" fill="none" stroke="#c8c8c8" stroke-width="2.1"/><path d="M23.76 7.75 L23.94 11.32 L26.95 13.26 L23.38 13.44 L21.44 16.45 L21.26 12.88 L18.25 10.94 L21.82 10.76 Z" fill="#c8c8c8"/><path d="M17.37 15.19 L17.52 17.22 L19.21 18.37 L17.18 18.52 L16.03 20.21 L15.88 18.18 L14.19 17.03 L16.22 16.88 Z" fill="#c8c8c8"/><circle cx="16.5" cy="11.5" r="0.6" fill="#d8d8d8"/><circle cx="11.5" cy="10.5" r="3.6" fill="#2a8cf0"/></svg>
<svg style="position:absolute;left:724px;top:916px;" width="70" height="32" viewBox="0 0 70 32"><rect x="9.5" y="10.6" width="13.2" height="11" fill="none" stroke="#c4c4c4" stroke-width="1.3"/><path d="M9.5 21.6 V17.6 L11.4 15.6 L12.8 14.4 L14.4 16.6 V21.6 Z" fill="#c4c4c4"/><rect x="17.8" y="13" width="2.2" height="1" fill="#c4c4c4"/><circle cx="19.5" cy="19.5" r="5.2" fill="#313131"/><circle cx="19.5" cy="19.5" r="4.4" fill="#c8c8c8"/><path d="M19.5 16.9 V22.1 M16.9 19.5 H22.1" stroke="#313131" stroke-width="1.2"/><circle cx="39.9" cy="16.15" r="2.15" fill="#c4c4c4"/><circle cx="46" cy="16.15" r="2.15" fill="#c4c4c4"/><circle cx="52" cy="16.15" r="2.15" fill="#c4c4c4"/></svg>
</body></html>
